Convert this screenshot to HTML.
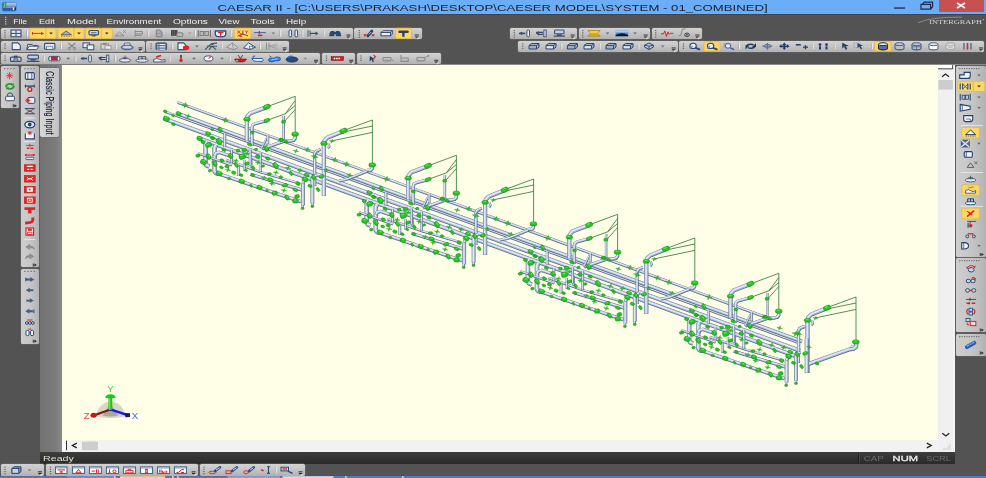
<!DOCTYPE html>
<html><head><meta charset="utf-8"><title>CAESAR II</title>
<style>
html,body{margin:0;padding:0;}
body{width:986px;height:478px;overflow:hidden;background:#535353;position:relative;font-family:"Liberation Sans",sans-serif;}
div{position:absolute;box-sizing:border-box;}
.tb{background:linear-gradient(#d3d3d3,#c5c5c5 45%,#b1b1b1);border-radius:1.5px;box-shadow:0 0 0 0.5px #6a6a6a;}
.tb.v{background:linear-gradient(90deg,#cecece,#c6c6c6 50%,#b3b3b3);}
#title{left:0;top:0;width:986px;height:14px;background:#6badf6;}
#close{left:939px;top:0;width:45px;height:11.8px;background:#c75050;}
#menu{left:0;top:13.8px;width:986px;height:1px;background:#3d4656;}
#topline{left:0;top:64.3px;width:986px;height:1.1px;background:#8a8a8a;}
#canvas{left:62px;top:65.2px;width:876px;height:375.3px;background:#ffffe7;}
#lstrip{left:40px;top:65px;width:22px;height:387px;background:linear-gradient(90deg,#727272,#7b7b7b 70%,#8a8a8a);}
#tab{left:40.3px;top:68px;width:18.4px;height:68.6px;background:linear-gradient(90deg,#d6d6d6,#c3c3c3);border-radius:0 0 2px 2px;box-shadow:0 0 0 0.5px #666;}
#hs{left:62px;top:65px;width:893.4px;height:387.1px;background:#f2f2f2;}
#vs{left:938px;top:65px;width:15.2px;height:386.1px;background:#f0f0f0;}
#rstrip{left:953.2px;top:65px;width:2.2px;height:387px;background:#f3f3f3;}
#status{left:40px;top:452px;width:915px;height:11.6px;background:linear-gradient(#3d3d3d,#2a2a2a);}
#botstrip{left:0;top:476.2px;width:986px;height:2px;background:#3f7fd6;}
svg{position:absolute;left:0;top:0;}
text{font-family:"Liberation Sans",sans-serif;}
</style></head><body>
<div id="title"></div><div id="close"></div>
<div id="menu"></div><div id="topline"></div>
<div id="lstrip"></div><div id="tab"></div>
<div id="hs"></div><div id="vs"></div><div id="rstrip"></div><div id="canvas"></div>
<div id="status"></div>
<div id="botstrip"></div>
<div class="tb" style="left:1.3px;top:27.6px;width:351.5px;height:11.5px;"></div>
<div class="tb" style="left:354.3px;top:27.6px;width:67.3px;height:11.5px;"></div>
<div class="tb" style="left:510.0px;top:27.6px;width:66.8px;height:11.5px;"></div>
<div class="tb" style="left:578.7px;top:27.6px;width:71.0px;height:11.5px;"></div>
<div class="tb" style="left:651.7px;top:27.6px;width:50.0px;height:11.5px;"></div>
<div class="tb" style="left:1.3px;top:40.9px;width:143.3px;height:10.7px;"></div>
<div class="tb" style="left:146.0px;top:40.9px;width:142.7px;height:10.7px;"></div>
<div class="tb" style="left:518.3px;top:40.9px;width:159.4px;height:10.7px;"></div>
<div class="tb" style="left:679.4px;top:40.9px;width:304.9px;height:10.7px;"></div>
<div class="tb" style="left:1.3px;top:53.0px;width:319.0px;height:11.1px;"></div>
<div class="tb" style="left:322.0px;top:53.0px;width:33.0px;height:11.1px;"></div>
<div class="tb" style="left:356.5px;top:53.0px;width:84.1px;height:11.1px;"></div>
<div class="tb" style="left:1.3px;top:464.1px;width:42.7px;height:11.9px;"></div>
<div class="tb" style="left:46.0px;top:464.1px;width:152.0px;height:11.9px;"></div>
<div class="tb" style="left:199.7px;top:464.1px;width:105.3px;height:11.9px;"></div>
<div class="tb v" style="left:1.0px;top:66.1px;width:18.0px;height:42.3px;"></div>
<div class="tb v" style="left:21.2px;top:66.1px;width:17.8px;height:201.3px;"></div>
<div class="tb v" style="left:21.2px;top:268.9px;width:17.8px;height:74.7px;"></div>
<div class="tb v" style="left:955.6px;top:66.3px;width:30.9px;height:190.7px;"></div>
<div class="tb v" style="left:955.6px;top:258.4px;width:30.9px;height:74.0px;"></div>
<div class="tb v" style="left:955.6px;top:334.4px;width:30.9px;height:21.2px;"></div>
<svg width="986" height="478" viewBox="0 0 986 478">
<defs><filter id="soft" x="-2%" y="-2%" width="104%" height="104%"><feGaussianBlur stdDeviation="0.32"/></filter><filter id="soft2" x="-1%" y="-1%" width="102%" height="102%"><feGaussianBlur stdDeviation="0.28"/></filter></defs>
<g id="model" filter="url(#soft)">
<path d="M177.6 102.5L771.0 319.1" fill="none" stroke="#56657f" stroke-width="2.8" stroke-linejoin="round"/>
<path d="M177.6 102.5L771.0 319.1" fill="none" stroke="#a9bad4" stroke-width="1.9" stroke-linejoin="round" transform="translate(-0.12,-0.3)"/>
<path d="M177.6 102.5L771.0 319.1" fill="none" stroke="#e4ecf7" stroke-width="0.9" stroke-linejoin="round" transform="translate(-0.25,-0.45)"/>
<path d="M165.0 111.6L800.0 343.4" fill="none" stroke="#56657f" stroke-width="2.5" stroke-linejoin="round"/>
<path d="M165.0 111.6L800.0 343.4" fill="none" stroke="#a9bad4" stroke-width="1.6" stroke-linejoin="round" transform="translate(-0.12,-0.3)"/>
<path d="M165.0 111.6L800.0 343.4" fill="none" stroke="#e4ecf7" stroke-width="0.8" stroke-linejoin="round" transform="translate(-0.25,-0.45)"/>
<path d="M177.6 113.6L802.0 341.5" fill="none" stroke="#56657f" stroke-width="3.7" stroke-linejoin="round"/>
<path d="M177.6 113.6L802.0 341.5" fill="none" stroke="#a9bad4" stroke-width="2.8" stroke-linejoin="round" transform="translate(-0.12,-0.3)"/>
<path d="M177.6 113.6L802.0 341.5" fill="none" stroke="#e4ecf7" stroke-width="1.2" stroke-linejoin="round" transform="translate(-0.25,-0.45)"/>
<path d="M164.0 118.6L800.0 350.7" fill="none" stroke="#56657f" stroke-width="4.2" stroke-linejoin="round"/>
<path d="M164.0 118.6L800.0 350.7" fill="none" stroke="#a9bad4" stroke-width="3.3" stroke-linejoin="round" transform="translate(-0.12,-0.3)"/>
<path d="M164.0 118.6L800.0 350.7" fill="none" stroke="#e4ecf7" stroke-width="1.4" stroke-linejoin="round" transform="translate(-0.25,-0.45)"/>
<path d="M198.6 138.2L796.0 356.3" fill="none" stroke="#56657f" stroke-width="4.0" stroke-linejoin="round"/>
<path d="M198.6 138.2L796.0 356.3" fill="none" stroke="#a9bad4" stroke-width="3.1" stroke-linejoin="round" transform="translate(-0.12,-0.3)"/>
<path d="M198.6 138.2L796.0 356.3" fill="none" stroke="#e4ecf7" stroke-width="1.3" stroke-linejoin="round" transform="translate(-0.25,-0.45)"/>
<g id="rp"><path d="M369.4 170.4L347.0 179.4L339.0 181.0" fill="none" stroke="#56657f" stroke-width="3.0" stroke-linejoin="round"/><path d="M369.4 170.4L347.0 179.4L339.0 181.0" fill="none" stroke="#a9bad4" stroke-width="2.1" stroke-linejoin="round" transform="translate(-0.12,-0.3)"/><path d="M369.4 170.4L347.0 179.4L339.0 181.0" fill="none" stroke="#e4ecf7" stroke-width="1.0" stroke-linejoin="round" transform="translate(-0.25,-0.45)"/><path d="M310.5 150.3L307.9 150.3L306.6 152.1L306.5 150.0L304.3 148.9L306.9 148.9L308.2 147.1L308.3 149.2z" fill="#24c624" stroke="#0f850f" stroke-width="0.3"/><path d="M337.9 160.5L335.3 160.5L334.0 162.3L333.9 160.2L331.7 159.1L334.3 159.1L335.6 157.3L335.7 159.4z" fill="#24c624" stroke="#0f850f" stroke-width="0.3"/></g>
<use href="#rp" transform="translate(161.2,59.0)"/>
<use href="#rp" transform="translate(322.4,118.0)"/>
<g id="mp"><path d="M246.9 141.0L246.9 120.5L247.4 116.6L250.2 113.4L266.4 107.2" fill="none" stroke="#56657f" stroke-width="4.2" stroke-linejoin="round"/>
<path d="M246.9 141.0L246.9 120.5L247.4 116.6L250.2 113.4L266.4 107.2" fill="none" stroke="#a9bad4" stroke-width="3.4" stroke-linejoin="round" transform="translate(-0.12,-0.3)"/>
<path d="M246.9 141.0L246.9 120.5L247.4 116.6L250.2 113.4L266.4 107.2" fill="none" stroke="#e4ecf7" stroke-width="1.4" stroke-linejoin="round" transform="translate(-0.25,-0.45)"/>
<path d="M295.2 135.0L295.2 138.4L293.6 140.4L290.0 141.0L283.5 141.4L262.0 149.0" fill="none" stroke="#56657f" stroke-width="3.3" stroke-linejoin="round"/>
<path d="M295.2 135.0L295.2 138.4L293.6 140.4L290.0 141.0L283.5 141.4L262.0 149.0" fill="none" stroke="#a9bad4" stroke-width="2.4" stroke-linejoin="round" transform="translate(-0.12,-0.3)"/>
<path d="M295.2 135.0L295.2 138.4L293.6 140.4L290.0 141.0L283.5 141.4L262.0 149.0" fill="none" stroke="#e4ecf7" stroke-width="1.1" stroke-linejoin="round" transform="translate(-0.25,-0.45)"/>
<path d="M252.0 146.0L252.0 128.2L252.6 125.4L254.6 124.0L266.6 120.7" fill="none" stroke="#56657f" stroke-width="3.2" stroke-linejoin="round"/>
<path d="M252.0 146.0L252.0 128.2L252.6 125.4L254.6 124.0L266.6 120.7" fill="none" stroke="#a9bad4" stroke-width="2.4" stroke-linejoin="round" transform="translate(-0.12,-0.3)"/>
<path d="M252.0 146.0L252.0 128.2L252.6 125.4L254.6 124.0L266.6 120.7" fill="none" stroke="#e4ecf7" stroke-width="1.1" stroke-linejoin="round" transform="translate(-0.25,-0.45)"/>
<path d="M283.7 139.5L283.7 116.0" fill="none" stroke="#56657f" stroke-width="2.5" stroke-linejoin="round"/>
<path d="M283.7 139.5L283.7 116.0" fill="none" stroke="#a9bad4" stroke-width="1.6" stroke-linejoin="round" transform="translate(-0.12,-0.3)"/>
<path d="M283.7 139.5L283.7 116.0" fill="none" stroke="#e4ecf7" stroke-width="0.8" stroke-linejoin="round" transform="translate(-0.25,-0.45)"/>
<path d="M267.6 136.4L261.4 149.0" fill="none" stroke="#56657f" stroke-width="2.1" stroke-linejoin="round"/>
<path d="M267.6 136.4L261.4 149.0" fill="none" stroke="#a9bad4" stroke-width="1.2" stroke-linejoin="round" transform="translate(-0.12,-0.3)"/>
<path d="M267.6 136.4L261.4 149.0" fill="none" stroke="#e4ecf7" stroke-width="0.7" stroke-linejoin="round" transform="translate(-0.25,-0.45)"/>
<path d="M323.9 196.0L323.9 144.5L324.6 140.6L327.6 137.6L343.2 131.2" fill="none" stroke="#56657f" stroke-width="4.2" stroke-linejoin="round"/>
<path d="M323.9 196.0L323.9 144.5L324.6 140.6L327.6 137.6L343.2 131.2" fill="none" stroke="#a9bad4" stroke-width="3.4" stroke-linejoin="round" transform="translate(-0.12,-0.3)"/>
<path d="M323.9 196.0L323.9 144.5L324.6 140.6L327.6 137.6L343.2 131.2" fill="none" stroke="#e4ecf7" stroke-width="1.4" stroke-linejoin="round" transform="translate(-0.25,-0.45)"/>
<path d="M328.4 143.5L329.4 146.5L328.0 148.4" fill="none" stroke="#56657f" stroke-width="2.2" stroke-linejoin="round"/>
<path d="M328.4 143.5L329.4 146.5L328.0 148.4" fill="none" stroke="#a9bad4" stroke-width="1.4" stroke-linejoin="round" transform="translate(-0.12,-0.3)"/>
<path d="M328.4 143.5L329.4 146.5L328.0 148.4" fill="none" stroke="#e4ecf7" stroke-width="0.7" stroke-linejoin="round" transform="translate(-0.25,-0.45)"/>
<path d="M372.4 166.0L372.2 169.0L370.2 170.6L367.0 170.2" fill="none" stroke="#56657f" stroke-width="3.3" stroke-linejoin="round"/>
<path d="M372.4 166.0L372.2 169.0L370.2 170.6L367.0 170.2" fill="none" stroke="#a9bad4" stroke-width="2.4" stroke-linejoin="round" transform="translate(-0.12,-0.3)"/>
<path d="M372.4 166.0L372.2 169.0L370.2 170.6L367.0 170.2" fill="none" stroke="#e4ecf7" stroke-width="1.1" stroke-linejoin="round" transform="translate(-0.25,-0.45)"/>
<path d="M314.8 186.0L314.8 154.0L316.0 151.4L320.6 149.4" fill="none" stroke="#56657f" stroke-width="3.0" stroke-linejoin="round"/>
<path d="M314.8 186.0L314.8 154.0L316.0 151.4L320.6 149.4" fill="none" stroke="#a9bad4" stroke-width="2.1" stroke-linejoin="round" transform="translate(-0.12,-0.3)"/>
<path d="M314.8 186.0L314.8 154.0L316.0 151.4L320.6 149.4" fill="none" stroke="#e4ecf7" stroke-width="1.0" stroke-linejoin="round" transform="translate(-0.25,-0.45)"/>
<path d="M207.0 141.5L205.6 144.0L205.5 163.0L206.6 165.4L209.4 166.6" fill="none" stroke="#56657f" stroke-width="4.5" stroke-linejoin="round"/>
<path d="M207.0 141.5L205.6 144.0L205.5 163.0L206.6 165.4L209.4 166.6" fill="none" stroke="#a9bad4" stroke-width="3.6" stroke-linejoin="round" transform="translate(-0.12,-0.3)"/>
<path d="M207.0 141.5L205.6 144.0L205.5 163.0L206.6 165.4L209.4 166.6" fill="none" stroke="#e4ecf7" stroke-width="1.5" stroke-linejoin="round" transform="translate(-0.25,-0.45)"/>
<path d="M216.0 145.0L214.6 148.0L214.6 171.0L215.8 173.0L218.4 173.8" fill="none" stroke="#56657f" stroke-width="4.5" stroke-linejoin="round"/>
<path d="M216.0 145.0L214.6 148.0L214.6 171.0L215.8 173.0L218.4 173.8" fill="none" stroke="#a9bad4" stroke-width="3.6" stroke-linejoin="round" transform="translate(-0.12,-0.3)"/>
<path d="M216.0 145.0L214.6 148.0L214.6 171.0L215.8 173.0L218.4 173.8" fill="none" stroke="#e4ecf7" stroke-width="1.5" stroke-linejoin="round" transform="translate(-0.25,-0.45)"/>
<path d="M214.8 156.0L216.0 153.4L219.4 152.4L231.0 156.4" fill="none" stroke="#56657f" stroke-width="3.5" stroke-linejoin="round"/>
<path d="M214.8 156.0L216.0 153.4L219.4 152.4L231.0 156.4" fill="none" stroke="#a9bad4" stroke-width="2.6" stroke-linejoin="round" transform="translate(-0.12,-0.3)"/>
<path d="M214.8 156.0L216.0 153.4L219.4 152.4L231.0 156.4" fill="none" stroke="#e4ecf7" stroke-width="1.2" stroke-linejoin="round" transform="translate(-0.25,-0.45)"/>
<path d="M198.0 153.4L232.0 165.4" fill="none" stroke="#56657f" stroke-width="2.3" stroke-linejoin="round"/>
<path d="M198.0 153.4L232.0 165.4" fill="none" stroke="#a9bad4" stroke-width="1.4" stroke-linejoin="round" transform="translate(-0.12,-0.3)"/>
<path d="M198.0 153.4L232.0 165.4" fill="none" stroke="#e4ecf7" stroke-width="0.8" stroke-linejoin="round" transform="translate(-0.25,-0.45)"/>
<path d="M218.0 173.6L287.9 197.4L301.0 201.6" fill="none" stroke="#56657f" stroke-width="3.5" stroke-linejoin="round"/>
<path d="M218.0 173.6L287.9 197.4L301.0 201.6" fill="none" stroke="#a9bad4" stroke-width="2.6" stroke-linejoin="round" transform="translate(-0.12,-0.3)"/>
<path d="M218.0 173.6L287.9 197.4L301.0 201.6" fill="none" stroke="#e4ecf7" stroke-width="1.2" stroke-linejoin="round" transform="translate(-0.25,-0.45)"/>
<path d="M250.2 174.3L303.0 190.4" fill="none" stroke="#56657f" stroke-width="3.2" stroke-linejoin="round"/>
<path d="M250.2 174.3L303.0 190.4" fill="none" stroke="#a9bad4" stroke-width="2.3" stroke-linejoin="round" transform="translate(-0.12,-0.3)"/>
<path d="M250.2 174.3L303.0 190.4" fill="none" stroke="#e4ecf7" stroke-width="1.0" stroke-linejoin="round" transform="translate(-0.25,-0.45)"/>
<path d="M226.0 160.0L262.0 172.6L300.0 183.6" fill="none" stroke="#56657f" stroke-width="2.5" stroke-linejoin="round"/>
<path d="M226.0 160.0L262.0 172.6L300.0 183.6" fill="none" stroke="#a9bad4" stroke-width="1.6" stroke-linejoin="round" transform="translate(-0.12,-0.3)"/>
<path d="M226.0 160.0L262.0 172.6L300.0 183.6" fill="none" stroke="#e4ecf7" stroke-width="0.8" stroke-linejoin="round" transform="translate(-0.25,-0.45)"/>
<path d="M260.3 153.0L260.3 172.0" fill="none" stroke="#56657f" stroke-width="2.8" stroke-linejoin="round"/>
<path d="M260.3 153.0L260.3 172.0" fill="none" stroke="#a9bad4" stroke-width="1.9" stroke-linejoin="round" transform="translate(-0.12,-0.3)"/>
<path d="M260.3 153.0L260.3 172.0" fill="none" stroke="#e4ecf7" stroke-width="0.9" stroke-linejoin="round" transform="translate(-0.25,-0.45)"/>
<path d="M251.2 158.0L251.2 167.0" fill="none" stroke="#56657f" stroke-width="2.5" stroke-linejoin="round"/>
<path d="M251.2 158.0L251.2 167.0" fill="none" stroke="#a9bad4" stroke-width="1.6" stroke-linejoin="round" transform="translate(-0.12,-0.3)"/>
<path d="M251.2 158.0L251.2 167.0" fill="none" stroke="#e4ecf7" stroke-width="0.8" stroke-linejoin="round" transform="translate(-0.25,-0.45)"/>
<path d="M238.7 166.0L238.7 176.0" fill="none" stroke="#56657f" stroke-width="2.8" stroke-linejoin="round"/>
<path d="M238.7 166.0L238.7 176.0" fill="none" stroke="#a9bad4" stroke-width="1.9" stroke-linejoin="round" transform="translate(-0.12,-0.3)"/>
<path d="M238.7 166.0L238.7 176.0" fill="none" stroke="#e4ecf7" stroke-width="0.9" stroke-linejoin="round" transform="translate(-0.25,-0.45)"/>
<path d="M224.8 133.5L224.8 147.0" fill="none" stroke="#56657f" stroke-width="2.8" stroke-linejoin="round"/>
<path d="M224.8 133.5L224.8 147.0" fill="none" stroke="#a9bad4" stroke-width="1.9" stroke-linejoin="round" transform="translate(-0.12,-0.3)"/>
<path d="M224.8 133.5L224.8 147.0" fill="none" stroke="#e4ecf7" stroke-width="0.9" stroke-linejoin="round" transform="translate(-0.25,-0.45)"/>
<path d="M250.2 149.5L250.2 165.5" fill="none" stroke="#56657f" stroke-width="2.8" stroke-linejoin="round"/>
<path d="M250.2 149.5L250.2 165.5" fill="none" stroke="#a9bad4" stroke-width="1.9" stroke-linejoin="round" transform="translate(-0.12,-0.3)"/>
<path d="M250.2 149.5L250.2 165.5" fill="none" stroke="#e4ecf7" stroke-width="0.9" stroke-linejoin="round" transform="translate(-0.25,-0.45)"/>
<path d="M268.0 135.4L268.0 144.0" fill="none" stroke="#56657f" stroke-width="2.5" stroke-linejoin="round"/>
<path d="M268.0 135.4L268.0 144.0" fill="none" stroke="#a9bad4" stroke-width="1.6" stroke-linejoin="round" transform="translate(-0.12,-0.3)"/>
<path d="M268.0 135.4L268.0 144.0" fill="none" stroke="#e4ecf7" stroke-width="0.8" stroke-linejoin="round" transform="translate(-0.25,-0.45)"/>
<path d="M231.6 150.0L231.6 163.0" fill="none" stroke="#56657f" stroke-width="2.5" stroke-linejoin="round"/>
<path d="M231.6 150.0L231.6 163.0" fill="none" stroke="#a9bad4" stroke-width="1.6" stroke-linejoin="round" transform="translate(-0.12,-0.3)"/>
<path d="M231.6 150.0L231.6 163.0" fill="none" stroke="#e4ecf7" stroke-width="0.8" stroke-linejoin="round" transform="translate(-0.25,-0.45)"/>
<path d="M244.4 160.0L244.4 171.0" fill="none" stroke="#56657f" stroke-width="2.3" stroke-linejoin="round"/>
<path d="M244.4 160.0L244.4 171.0" fill="none" stroke="#a9bad4" stroke-width="1.4" stroke-linejoin="round" transform="translate(-0.12,-0.3)"/>
<path d="M244.4 160.0L244.4 171.0" fill="none" stroke="#e4ecf7" stroke-width="0.8" stroke-linejoin="round" transform="translate(-0.25,-0.45)"/>
<path d="M303.0 183.4L303.0 205.4" fill="none" stroke="#56657f" stroke-width="3.8" stroke-linejoin="round"/>
<path d="M303.0 183.4L303.0 205.4" fill="none" stroke="#a9bad4" stroke-width="2.9" stroke-linejoin="round" transform="translate(-0.12,-0.3)"/>
<path d="M303.0 183.4L303.0 205.4" fill="none" stroke="#e4ecf7" stroke-width="1.2" stroke-linejoin="round" transform="translate(-0.25,-0.45)"/>
<path d="M312.4 178.0L312.4 203.6" fill="none" stroke="#56657f" stroke-width="3.8" stroke-linejoin="round"/>
<path d="M312.4 178.0L312.4 203.6" fill="none" stroke="#a9bad4" stroke-width="2.9" stroke-linejoin="round" transform="translate(-0.12,-0.3)"/>
<path d="M312.4 178.0L312.4 203.6" fill="none" stroke="#e4ecf7" stroke-width="1.2" stroke-linejoin="round" transform="translate(-0.25,-0.45)"/>
<path d="M303.0 183.6L304.0 181.0L307.0 179.6" fill="none" stroke="#56657f" stroke-width="3.3" stroke-linejoin="round"/>
<path d="M303.0 183.6L304.0 181.0L307.0 179.6" fill="none" stroke="#a9bad4" stroke-width="2.4" stroke-linejoin="round" transform="translate(-0.12,-0.3)"/>
<path d="M303.0 183.6L304.0 181.0L307.0 179.6" fill="none" stroke="#e4ecf7" stroke-width="1.1" stroke-linejoin="round" transform="translate(-0.25,-0.45)"/>
<path d="M312.4 178.4L313.6 176.4L317.0 175.4" fill="none" stroke="#56657f" stroke-width="3.3" stroke-linejoin="round"/>
<path d="M312.4 178.4L313.6 176.4L317.0 175.4" fill="none" stroke="#a9bad4" stroke-width="2.4" stroke-linejoin="round" transform="translate(-0.12,-0.3)"/>
<path d="M312.4 178.4L313.6 176.4L317.0 175.4" fill="none" stroke="#e4ecf7" stroke-width="1.1" stroke-linejoin="round" transform="translate(-0.25,-0.45)"/>
<path d="M302.6 205.0L302.6 208.0" fill="none" stroke="#56657f" stroke-width="2.3" stroke-linejoin="round"/>
<path d="M302.6 205.0L302.6 208.0" fill="none" stroke="#a9bad4" stroke-width="1.4" stroke-linejoin="round" transform="translate(-0.12,-0.3)"/>
<path d="M302.6 205.0L302.6 208.0" fill="none" stroke="#e4ecf7" stroke-width="0.8" stroke-linejoin="round" transform="translate(-0.25,-0.45)"/>
<path d="M312.4 203.0L312.4 206.0" fill="none" stroke="#56657f" stroke-width="2.3" stroke-linejoin="round"/>
<path d="M312.4 203.0L312.4 206.0" fill="none" stroke="#a9bad4" stroke-width="1.4" stroke-linejoin="round" transform="translate(-0.12,-0.3)"/>
<path d="M312.4 203.0L312.4 206.0" fill="none" stroke="#e4ecf7" stroke-width="0.8" stroke-linejoin="round" transform="translate(-0.25,-0.45)"/></g>
<use href="#mp" transform="translate(161.2,59.0)"/>
<use href="#mp" transform="translate(322.4,118.0)"/>
<use href="#mp" transform="translate(483.6,177.0)"/>
<path d="M856.4 344.0L856.2 347.0L853.6 349.0L849.0 349.6L808.5 364.0" fill="none" stroke="#56657f" stroke-width="4.0" stroke-linejoin="round"/>
<path d="M856.4 344.0L856.2 347.0L853.6 349.0L849.0 349.6L808.5 364.0" fill="none" stroke="#a9bad4" stroke-width="3.1" stroke-linejoin="round" transform="translate(-0.12,-0.3)"/>
<path d="M856.4 344.0L856.2 347.0L853.6 349.0L849.0 349.6L808.5 364.0" fill="none" stroke="#e4ecf7" stroke-width="1.3" stroke-linejoin="round" transform="translate(-0.25,-0.45)"/>
<path d="M798.6 352.0L798.6 331.0L799.8 328.4L805.0 326.4" fill="none" stroke="#56657f" stroke-width="3.2" stroke-linejoin="round"/>
<path d="M798.6 352.0L798.6 331.0L799.8 328.4L805.0 326.4" fill="none" stroke="#a9bad4" stroke-width="2.3" stroke-linejoin="round" transform="translate(-0.12,-0.3)"/>
<path d="M798.6 352.0L798.6 331.0L799.8 328.4L805.0 326.4" fill="none" stroke="#e4ecf7" stroke-width="1.0" stroke-linejoin="round" transform="translate(-0.25,-0.45)"/>
<path d="M806.8 338.6L806.8 373.0" fill="none" stroke="#56657f" stroke-width="4.2" stroke-linejoin="round"/>
<path d="M806.8 338.6L806.8 373.0" fill="none" stroke="#a9bad4" stroke-width="3.4" stroke-linejoin="round" transform="translate(-0.12,-0.3)"/>
<path d="M806.8 338.6L806.8 373.0" fill="none" stroke="#e4ecf7" stroke-width="1.4" stroke-linejoin="round" transform="translate(-0.25,-0.45)"/>
<g id="mh"><path d="M267.0 106.8L295.2 96.3L295.2 132.5" fill="none" stroke="#2a742e" stroke-width="0.8"/>
<path d="M267.0 120.4L285.2 113.8L295.2 100.5" fill="none" stroke="#2a742e" stroke-width="0.8"/>
<path d="M285.2 113.8L295.2 105.5" fill="none" stroke="#2a742e" stroke-width="0.8"/>
<path d="M284.0 122.0L295.2 109.5" fill="none" stroke="#2a742e" stroke-width="0.8"/>
<path d="M343.5 130.6L372.4 120.0L372.4 163.0" fill="none" stroke="#2a742e" stroke-width="0.8"/>
<path d="M344.5 131.8L372.4 126.0" fill="none" stroke="#2a742e" stroke-width="0.8"/>
<path d="M331.4 141.0L372.4 132.4" fill="none" stroke="#2a742e" stroke-width="0.8"/></g>
<use href="#mh" transform="translate(161.2,59.0)"/>
<use href="#mh" transform="translate(322.4,118.0)"/>
<use href="#mh" transform="translate(483.6,177.0)"/>
<rect x="163.2" y="116.5" width="6.3" height="4.5" rx="1.7" transform="rotate(20 166.3 118.8)" fill="#24c624" stroke="#0f850f" stroke-width="0.5"/>
<rect x="164.6" y="117.1" width="2.8" height="1.2" rx="0.5" transform="rotate(20 166.3 118.8)" fill="#6be86b" opacity=".8"/>
<rect x="176.0" y="111.9" width="5.2" height="3.7" rx="1.4" transform="rotate(20 178.6 113.8)" fill="#24c624" stroke="#0f850f" stroke-width="0.5"/>
<rect x="177.2" y="112.4" width="2.3" height="1.0" rx="0.5" transform="rotate(20 178.6 113.8)" fill="#6be86b" opacity=".8"/>
<rect x="163.5" y="110.2" width="3.4" height="2.4" rx="0.9" transform="rotate(20 165.2 111.4)" fill="#24c624" stroke="#0f850f" stroke-width="0.5"/>
<rect x="196.9" y="136.5" width="5.4" height="3.9" rx="1.5" transform="rotate(20 199.6 138.4)" fill="#24c624" stroke="#0f850f" stroke-width="0.5"/>
<rect x="198.1" y="136.9" width="2.4" height="1.1" rx="0.5" transform="rotate(20 199.6 138.4)" fill="#6be86b" opacity=".8"/>
<rect x="171.7" y="123.0" width="3.4" height="2.4" rx="0.9" transform="rotate(20 173.4 124.2)" fill="#24c624" stroke="#0f850f" stroke-width="0.5"/>
<rect x="171.7" y="114.6" width="2.7" height="1.9" rx="0.7" transform="rotate(20 173.0 115.6)" fill="#24c624" stroke="#0f850f" stroke-width="0.5"/>
<g id="mg"><rect x="243.7" y="117.4" width="6.5" height="3.6" rx="1.8" transform="rotate(0 246.9 119.2)" fill="#24c624" stroke="#0f850f" stroke-width="0.5"/>
<rect x="245.1" y="117.9" width="2.9" height="1.0" rx="0.5" transform="rotate(0 246.9 119.2)" fill="#6be86b" opacity=".8"/>
<rect x="263.2" y="104.7" width="7.2" height="4.3" rx="2.0" transform="rotate(-20 266.8 106.9)" fill="#24c624" stroke="#0f850f" stroke-width="0.5"/>
<rect x="264.8" y="105.3" width="3.2" height="1.2" rx="0.5" transform="rotate(-20 266.8 106.9)" fill="#6be86b" opacity=".8"/>
<rect x="291.8" y="132.2" width="6.7" height="4.0" rx="1.8" transform="rotate(0 295.2 134.2)" fill="#24c624" stroke="#0f850f" stroke-width="0.5"/>
<rect x="293.4" y="132.7" width="3.0" height="1.1" rx="0.5" transform="rotate(0 295.2 134.2)" fill="#6be86b" opacity=".8"/>
<rect x="264.0" y="118.8" width="6.0" height="3.3" rx="1.7" transform="rotate(-18 267.0 120.5)" fill="#24c624" stroke="#0f850f" stroke-width="0.5"/>
<rect x="265.3" y="119.3" width="2.7" height="0.9" rx="0.5" transform="rotate(-18 267.0 120.5)" fill="#6be86b" opacity=".8"/>
<rect x="250.4" y="131.3" width="3.6" height="2.4" rx="1.0" transform="rotate(20 252.2 132.5)" fill="#24c624" stroke="#0f850f" stroke-width="0.5"/>
<rect x="281.5" y="120.4" width="4.0" height="2.7" rx="1.1" transform="rotate(0 283.5 121.8)" fill="#24c624" stroke="#0f850f" stroke-width="0.5"/>
<rect x="279.2" y="138.3" width="4.5" height="3.0" rx="1.2" transform="rotate(20 281.4 139.8)" fill="#24c624" stroke="#0f850f" stroke-width="0.5"/>
<rect x="284.2" y="140.4" width="3.6" height="2.4" rx="1.0" transform="rotate(20 286.0 141.6)" fill="#24c624" stroke="#0f850f" stroke-width="0.5"/>
<rect x="320.7" y="141.6" width="6.5" height="3.6" rx="1.8" transform="rotate(0 323.9 143.4)" fill="#24c624" stroke="#0f850f" stroke-width="0.5"/>
<rect x="322.1" y="142.1" width="2.9" height="1.0" rx="0.5" transform="rotate(0 323.9 143.4)" fill="#6be86b" opacity=".8"/>
<rect x="339.8" y="128.7" width="7.4" height="4.4" rx="2.0" transform="rotate(-20 343.5 130.9)" fill="#24c624" stroke="#0f850f" stroke-width="0.5"/>
<rect x="341.5" y="129.2" width="3.3" height="1.2" rx="0.5" transform="rotate(-20 343.5 130.9)" fill="#6be86b" opacity=".8"/>
<path d="M334.3 141.7L332.2 141.8L331.1 143.2L331.1 141.5L329.3 140.7L331.4 140.6L332.5 139.2L332.5 140.9z" fill="#24c624" stroke="#0f850f" stroke-width="0.3"/>
<rect x="368.9" y="163.0" width="6.7" height="4.0" rx="1.8" transform="rotate(0 372.3 165.0)" fill="#24c624" stroke="#0f850f" stroke-width="0.5"/>
<rect x="370.5" y="163.5" width="3.0" height="1.1" rx="0.5" transform="rotate(0 372.3 165.0)" fill="#6be86b" opacity=".8"/>
<path d="M318.2 157.4L315.2 157.4L313.6 159.5L313.6 157.1L311.0 155.8L314.0 155.8L315.6 153.7L315.6 156.1z" fill="#24c624" stroke="#0f850f" stroke-width="0.3"/>
<path d="M327.9 170.5L325.8 170.6L324.7 172.0L324.7 170.3L322.9 169.5L325.0 169.4L326.1 168.0L326.1 169.7z" fill="#24c624" stroke="#0f850f" stroke-width="0.3"/>
<path d="M188.5 105.9L185.7 106.0L184.2 107.9L184.1 105.6L181.7 104.5L184.5 104.4L186.0 102.5L186.1 104.8z" fill="#24c624" stroke="#0f850f" stroke-width="0.3"/>
<path d="M228.6 120.7L225.8 120.8L224.3 122.7L224.2 120.4L221.8 119.3L224.6 119.2L226.1 117.3L226.2 119.6z" fill="#24c624" stroke="#0f850f" stroke-width="0.3"/>
<path d="M191.0 116.8L188.7 116.8L187.4 118.4L187.4 116.6L185.4 115.6L187.7 115.6L189.0 114.0L189.0 115.8z" fill="#24c624" stroke="#0f850f" stroke-width="0.3"/>
<rect x="301.1" y="207.4" width="2.9" height="2.0" rx="0.8" transform="rotate(0 302.6 208.4)" fill="#24c624" stroke="#0f850f" stroke-width="0.5"/>
<rect x="310.9" y="205.4" width="2.9" height="2.0" rx="0.8" transform="rotate(0 312.4 206.4)" fill="#24c624" stroke="#0f850f" stroke-width="0.5"/>
<rect x="215.9" y="139.1" width="6.2" height="4.7" rx="1.7" transform="rotate(55 219.0 141.5)" fill="#24c624" stroke="#0f850f" stroke-width="0.5"/>
<rect x="217.3" y="139.7" width="2.8" height="1.3" rx="0.5" transform="rotate(55 219.0 141.5)" fill="#6be86b" opacity=".8"/>
<rect x="205.4" y="142.9" width="6.3" height="4.2" rx="1.7" transform="rotate(-15 208.5 145.0)" fill="#24c624" stroke="#0f850f" stroke-width="0.5"/>
<rect x="206.8" y="143.4" width="2.8" height="1.2" rx="0.5" transform="rotate(-15 208.5 145.0)" fill="#6be86b" opacity=".8"/>
<rect x="200.5" y="159.8" width="6.0" height="4.5" rx="1.6" transform="rotate(20 203.5 162.0)" fill="#24c624" stroke="#0f850f" stroke-width="0.5"/>
<rect x="201.9" y="160.3" width="2.7" height="1.2" rx="0.5" transform="rotate(20 203.5 162.0)" fill="#6be86b" opacity=".8"/>
<rect x="205.8" y="154.6" width="5.4" height="4.1" rx="1.5" transform="rotate(55 208.5 156.6)" fill="#24c624" stroke="#0f850f" stroke-width="0.5"/>
<rect x="207.0" y="155.1" width="2.4" height="1.1" rx="0.5" transform="rotate(55 208.5 156.6)" fill="#6be86b" opacity=".8"/>
<rect x="247.4" y="143.2" width="4.5" height="2.6" rx="1.2" transform="rotate(20 249.7 144.5)" fill="#24c624" stroke="#0f850f" stroke-width="0.5"/>
<rect x="241.9" y="148.4" width="4.7" height="3.3" rx="1.3" transform="rotate(0 244.2 150.0)" fill="#24c624" stroke="#0f850f" stroke-width="0.5"/>
<rect x="239.0" y="154.1" width="6.4" height="5.1" rx="1.8" transform="rotate(-15 242.2 156.6)" fill="#24c624" stroke="#0f850f" stroke-width="0.5"/>
<rect x="240.4" y="154.7" width="2.9" height="1.4" rx="0.5" transform="rotate(-15 242.2 156.6)" fill="#6be86b" opacity=".8"/>
<rect x="228.0" y="154.1" width="5.2" height="3.7" rx="1.4" transform="rotate(55 230.6 156.0)" fill="#24c624" stroke="#0f850f" stroke-width="0.5"/>
<rect x="229.2" y="154.6" width="2.3" height="1.0" rx="0.5" transform="rotate(55 230.6 156.0)" fill="#6be86b" opacity=".8"/>
<rect x="233.6" y="163.5" width="5.2" height="2.9" rx="1.4" transform="rotate(55 236.2 165.0)" fill="#24c624" stroke="#0f850f" stroke-width="0.5"/>
<rect x="234.8" y="163.9" width="2.3" height="0.8" rx="0.5" transform="rotate(55 236.2 165.0)" fill="#6be86b" opacity=".8"/>
<rect x="231.7" y="171.2" width="4.1" height="2.9" rx="1.1" transform="rotate(20 233.7 172.6)" fill="#24c624" stroke="#0f850f" stroke-width="0.5"/>
<rect x="215.9" y="171.3" width="6.3" height="4.1" rx="1.7" transform="rotate(20 219.0 173.4)" fill="#24c624" stroke="#0f850f" stroke-width="0.5"/>
<rect x="217.3" y="171.8" width="2.8" height="1.1" rx="0.5" transform="rotate(20 219.0 173.4)" fill="#6be86b" opacity=".8"/>
<rect x="211.6" y="161.8" width="5.9" height="3.6" rx="1.6" transform="rotate(55 214.6 163.6)" fill="#24c624" stroke="#0f850f" stroke-width="0.5"/>
<rect x="213.0" y="162.3" width="2.7" height="1.0" rx="0.5" transform="rotate(55 214.6 163.6)" fill="#6be86b" opacity=".8"/>
<rect x="238.9" y="179.4" width="5.6" height="4.0" rx="1.5" transform="rotate(20 241.7 181.4)" fill="#24c624" stroke="#0f850f" stroke-width="0.5"/>
<rect x="240.2" y="179.9" width="2.5" height="1.1" rx="0.5" transform="rotate(20 241.7 181.4)" fill="#6be86b" opacity=".8"/>
<rect x="267.6" y="178.2" width="5.4" height="3.5" rx="1.5" transform="rotate(20 270.3 180.0)" fill="#24c624" stroke="#0f850f" stroke-width="0.5"/>
<rect x="268.8" y="178.7" width="2.4" height="1.0" rx="0.5" transform="rotate(20 270.3 180.0)" fill="#6be86b" opacity=".8"/>
<rect x="255.6" y="155.1" width="4.2" height="3.1" rx="1.2" transform="rotate(20 257.7 156.6)" fill="#24c624" stroke="#0f850f" stroke-width="0.5"/>
<rect x="265.8" y="157.2" width="4.0" height="2.7" rx="1.1" transform="rotate(20 267.8 158.6)" fill="#24c624" stroke="#0f850f" stroke-width="0.5"/>
<rect x="251.3" y="166.6" width="3.7" height="2.7" rx="1.0" transform="rotate(55 253.2 168.0)" fill="#24c624" stroke="#0f850f" stroke-width="0.5"/>
<rect x="250.9" y="173.8" width="3.7" height="2.4" rx="1.0" transform="rotate(20 252.7 175.0)" fill="#24c624" stroke="#0f850f" stroke-width="0.5"/>
<rect x="267.2" y="172.8" width="4.2" height="2.3" rx="1.2" transform="rotate(0 269.3 174.0)" fill="#24c624" stroke="#0f850f" stroke-width="0.5"/>
<rect x="239.4" y="174.0" width="3.5" height="2.3" rx="1.0" transform="rotate(20 241.2 175.2)" fill="#24c624" stroke="#0f850f" stroke-width="0.5"/>
<rect x="195.9" y="154.2" width="4.2" height="2.8" rx="1.2" transform="rotate(-15 198.0 155.6)" fill="#24c624" stroke="#0f850f" stroke-width="0.5"/>
<rect x="201.1" y="140.6" width="3.8" height="2.9" rx="1.1" transform="rotate(20 203.0 142.0)" fill="#24c624" stroke="#0f850f" stroke-width="0.5"/>
<rect x="210.4" y="136.6" width="4.3" height="2.7" rx="1.2" transform="rotate(20 212.6 138.0)" fill="#24c624" stroke="#0f850f" stroke-width="0.5"/>
<rect x="265.1" y="148.8" width="3.3" height="2.5" rx="0.9" transform="rotate(-15 266.8 150.0)" fill="#24c624" stroke="#0f850f" stroke-width="0.5"/>
<rect x="256.9" y="185.6" width="5.3" height="3.9" rx="1.5" transform="rotate(20 259.6 187.5)" fill="#24c624" stroke="#0f850f" stroke-width="0.5"/>
<rect x="258.1" y="186.1" width="2.4" height="1.1" rx="0.5" transform="rotate(20 259.6 187.5)" fill="#6be86b" opacity=".8"/>
<rect x="272.1" y="191.2" width="5.2" height="3.9" rx="1.4" transform="rotate(-15 274.7 193.1)" fill="#24c624" stroke="#0f850f" stroke-width="0.5"/>
<rect x="273.3" y="191.7" width="2.3" height="1.1" rx="0.5" transform="rotate(-15 274.7 193.1)" fill="#6be86b" opacity=".8"/>
<rect x="284.2" y="195.9" width="5.4" height="3.2" rx="1.5" transform="rotate(55 286.9 197.5)" fill="#24c624" stroke="#0f850f" stroke-width="0.5"/>
<rect x="285.4" y="196.3" width="2.4" height="0.9" rx="0.5" transform="rotate(55 286.9 197.5)" fill="#6be86b" opacity=".8"/>
<rect x="292.7" y="198.9" width="5.5" height="4.1" rx="1.5" transform="rotate(0 295.4 200.9)" fill="#24c624" stroke="#0f850f" stroke-width="0.5"/>
<rect x="293.9" y="199.4" width="2.5" height="1.1" rx="0.5" transform="rotate(0 295.4 200.9)" fill="#6be86b" opacity=".8"/>
<rect x="282.3" y="183.7" width="5.3" height="3.1" rx="1.5" transform="rotate(-15 285.0 185.2)" fill="#24c624" stroke="#0f850f" stroke-width="0.5"/>
<rect x="283.5" y="184.0" width="2.4" height="0.9" rx="0.5" transform="rotate(-15 285.0 185.2)" fill="#6be86b" opacity=".8"/>
<rect x="292.9" y="188.6" width="4.9" height="2.7" rx="1.4" transform="rotate(20 295.4 190.0)" fill="#24c624" stroke="#0f850f" stroke-width="0.5"/>
<rect x="294.0" y="189.0" width="2.2" height="0.7" rx="0.5" transform="rotate(20 295.4 190.0)" fill="#6be86b" opacity=".8"/>
<rect x="272.4" y="163.5" width="6.4" height="4.0" rx="1.8" transform="rotate(55 275.6 165.5)" fill="#24c624" stroke="#0f850f" stroke-width="0.5"/>
<rect x="273.8" y="164.0" width="2.9" height="1.1" rx="0.5" transform="rotate(55 275.6 165.5)" fill="#6be86b" opacity=".8"/>
<rect x="304.2" y="173.5" width="5.0" height="3.0" rx="1.4" transform="rotate(20 306.7 175.0)" fill="#24c624" stroke="#0f850f" stroke-width="0.5"/>
<rect x="305.3" y="173.9" width="2.3" height="0.8" rx="0.5" transform="rotate(20 306.7 175.0)" fill="#6be86b" opacity=".8"/>
<rect x="263.6" y="146.7" width="5.2" height="3.7" rx="1.4" transform="rotate(55 266.2 148.5)" fill="#24c624" stroke="#0f850f" stroke-width="0.5"/>
<rect x="264.8" y="147.1" width="2.3" height="1.0" rx="0.5" transform="rotate(55 266.2 148.5)" fill="#6be86b" opacity=".8"/>
<rect x="205.6" y="132.0" width="5.3" height="3.2" rx="1.5" transform="rotate(20 208.2 133.6)" fill="#24c624" stroke="#0f850f" stroke-width="0.5"/>
<rect x="206.7" y="132.4" width="2.4" height="0.9" rx="0.5" transform="rotate(20 208.2 133.6)" fill="#6be86b" opacity=".8"/>
<rect x="217.6" y="128.0" width="5.1" height="3.2" rx="1.4" transform="rotate(55 220.2 129.6)" fill="#24c624" stroke="#0f850f" stroke-width="0.5"/>
<rect x="218.8" y="128.4" width="2.3" height="0.9" rx="0.5" transform="rotate(55 220.2 129.6)" fill="#6be86b" opacity=".8"/>
<rect x="210.8" y="128.8" width="2.8" height="1.6" rx="0.8" transform="rotate(20 212.2 129.6)" fill="#24c624" stroke="#0f850f" stroke-width="0.5"/>
<rect x="211.3" y="137.6" width="2.7" height="1.7" rx="0.7" transform="rotate(0 212.7 138.4)" fill="#24c624" stroke="#0f850f" stroke-width="0.5"/>
<rect x="302.2" y="177.4" width="5.6" height="3.9" rx="1.5" transform="rotate(20 305.0 179.4)" fill="#24c624" stroke="#0f850f" stroke-width="0.5"/>
<rect x="303.5" y="177.9" width="2.5" height="1.1" rx="0.5" transform="rotate(20 305.0 179.4)" fill="#6be86b" opacity=".8"/>
<rect x="311.0" y="175.7" width="4.9" height="3.3" rx="1.4" transform="rotate(55 313.5 177.4)" fill="#24c624" stroke="#0f850f" stroke-width="0.5"/>
<rect x="312.1" y="176.2" width="2.2" height="0.9" rx="0.5" transform="rotate(55 313.5 177.4)" fill="#6be86b" opacity=".8"/>
<rect x="319.1" y="174.9" width="5.1" height="3.0" rx="1.4" transform="rotate(-15 321.7 176.4)" fill="#24c624" stroke="#0f850f" stroke-width="0.5"/>
<rect x="320.3" y="175.3" width="2.3" height="0.8" rx="0.5" transform="rotate(-15 321.7 176.4)" fill="#6be86b" opacity=".8"/>
<rect x="295.9" y="182.0" width="4.2" height="3.2" rx="1.2" transform="rotate(20 298.0 183.6)" fill="#24c624" stroke="#0f850f" stroke-width="0.5"/>
<rect x="307.8" y="184.7" width="4.3" height="2.5" rx="1.2" transform="rotate(20 310.0 186.0)" fill="#24c624" stroke="#0f850f" stroke-width="0.5"/>
<rect x="315.8" y="188.3" width="4.3" height="2.6" rx="1.2" transform="rotate(55 318.0 189.6)" fill="#24c624" stroke="#0f850f" stroke-width="0.5"/>
<rect x="294.7" y="194.8" width="4.7" height="3.3" rx="1.3" transform="rotate(-15 297.0 196.4)" fill="#24c624" stroke="#0f850f" stroke-width="0.5"/>
<rect x="221.9" y="148.8" width="4.1" height="2.4" rx="1.1" transform="rotate(20 224.0 150.0)" fill="#24c624" stroke="#0f850f" stroke-width="0.5"/>
<rect x="219.9" y="159.1" width="4.2" height="2.6" rx="1.2" transform="rotate(20 222.0 160.4)" fill="#24c624" stroke="#0f850f" stroke-width="0.5"/>
<rect x="225.0" y="165.2" width="4.0" height="2.6" rx="1.1" transform="rotate(20 227.0 166.5)" fill="#24c624" stroke="#0f850f" stroke-width="0.5"/>
<rect x="244.7" y="162.1" width="4.6" height="2.9" rx="1.3" transform="rotate(-15 247.0 163.5)" fill="#24c624" stroke="#0f850f" stroke-width="0.5"/>
<rect x="236.3" y="149.2" width="3.5" height="2.8" rx="1.0" transform="rotate(0 238.0 150.6)" fill="#24c624" stroke="#0f850f" stroke-width="0.5"/>
<rect x="254.5" y="148.4" width="3.0" height="2.1" rx="0.8" transform="rotate(-15 256.0 149.4)" fill="#24c624" stroke="#0f850f" stroke-width="0.5"/>
<rect x="288.7" y="172.1" width="4.6" height="2.6" rx="1.3" transform="rotate(55 291.0 173.4)" fill="#24c624" stroke="#0f850f" stroke-width="0.5"/>
<rect x="279.4" y="175.9" width="3.1" height="2.3" rx="0.9" transform="rotate(20 281.0 177.0)" fill="#24c624" stroke="#0f850f" stroke-width="0.5"/>
<rect x="261.5" y="165.0" width="3.0" height="2.0" rx="0.8" transform="rotate(-15 263.0 166.0)" fill="#24c624" stroke="#0f850f" stroke-width="0.5"/>
<rect x="244.5" y="169.5" width="3.0" height="1.9" rx="0.8" transform="rotate(20 246.0 170.4)" fill="#24c624" stroke="#0f850f" stroke-width="0.5"/>
<rect x="219.6" y="166.3" width="3.8" height="2.2" rx="1.0" transform="rotate(20 221.5 167.4)" fill="#24c624" stroke="#0f850f" stroke-width="0.5"/>
<rect x="208.5" y="169.4" width="3.1" height="2.4" rx="0.8" transform="rotate(-15 210.0 170.6)" fill="#24c624" stroke="#0f850f" stroke-width="0.5"/>
<rect x="227.5" y="177.4" width="3.0" height="2.1" rx="0.8" transform="rotate(0 229.0 178.4)" fill="#24c624" stroke="#0f850f" stroke-width="0.5"/>
<rect x="249.4" y="184.7" width="3.3" height="1.8" rx="0.9" transform="rotate(55 251.0 185.6)" fill="#24c624" stroke="#0f850f" stroke-width="0.5"/>
<rect x="265.7" y="189.7" width="2.6" height="1.9" rx="0.7" transform="rotate(20 267.0 190.6)" fill="#24c624" stroke="#0f850f" stroke-width="0.5"/>
<path d="M230.8 170.6L228.5 170.6L227.2 172.2L227.2 170.4L225.2 169.4L227.5 169.4L228.8 167.8L228.8 169.6z" fill="#24c624" stroke="#0f850f" stroke-width="0.3"/>
<path d="M238.8 161.2L236.5 161.2L235.2 162.8L235.2 161.0L233.2 160.0L235.5 160.0L236.8 158.4L236.8 160.2z" fill="#24c624" stroke="#0f850f" stroke-width="0.3"/>
<path d="M249.8 154.0L247.5 154.0L246.2 155.6L246.2 153.8L244.2 152.8L246.5 152.8L247.8 151.2L247.8 153.0z" fill="#24c624" stroke="#0f850f" stroke-width="0.3"/>
<path d="M260.8 163.2L258.5 163.2L257.2 164.8L257.2 163.0L255.2 162.0L257.5 162.0L258.8 160.4L258.8 162.2z" fill="#24c624" stroke="#0f850f" stroke-width="0.3"/>
<path d="M266.8 178.6L264.5 178.6L263.2 180.2L263.2 178.4L261.2 177.4L263.5 177.4L264.8 175.8L264.8 177.6z" fill="#24c624" stroke="#0f850f" stroke-width="0.3"/>
<path d="M278.8 173.2L276.5 173.2L275.2 174.8L275.2 173.0L273.2 172.0L275.5 172.0L276.8 170.4L276.8 172.2z" fill="#24c624" stroke="#0f850f" stroke-width="0.3"/>
<path d="M290.8 168.6L288.5 168.6L287.2 170.2L287.2 168.4L285.2 167.4L287.5 167.4L288.8 165.8L288.8 167.6z" fill="#24c624" stroke="#0f850f" stroke-width="0.3"/>
<path d="M284.1 140.8L281.8 140.8L280.5 142.4L280.5 140.6L278.5 139.6L280.8 139.6L282.1 138.0L282.1 139.8z" fill="#24c624" stroke="#0f850f" stroke-width="0.3"/>
<path d="M298.8 151.6L296.5 151.6L295.2 153.2L295.2 151.4L293.2 150.4L295.5 150.4L296.8 148.8L296.8 150.6z" fill="#24c624" stroke="#0f850f" stroke-width="0.3"/>
<path d="M274.8 184.2L272.5 184.2L271.2 185.8L271.2 184.0L269.2 183.0L271.5 183.0L272.8 181.4L272.8 183.2z" fill="#24c624" stroke="#0f850f" stroke-width="0.3"/>
<path d="M286.8 191.0L284.5 191.0L283.2 192.6L283.2 190.8L281.2 189.8L283.5 189.8L284.8 188.2L284.8 190.0z" fill="#24c624" stroke="#0f850f" stroke-width="0.3"/>
<path d="M302.8 171.2L300.5 171.2L299.2 172.8L299.2 171.0L297.2 170.0L299.5 170.0L300.8 168.4L300.8 170.2z" fill="#24c624" stroke="#0f850f" stroke-width="0.3"/></g>
<use href="#mg" transform="translate(161.2,59.0)"/>
<use href="#mg" transform="translate(322.4,118.0)"/>
<use href="#mg" transform="translate(483.6,177.0)"/>
<path d="M799.1 334.4L796.1 334.4L794.5 336.5L794.5 334.1L791.9 332.8L794.9 332.8L796.5 330.7L796.5 333.1z" fill="#24c624" stroke="#0f850f" stroke-width="0.3"/>
<rect x="815.2" y="362.2" width="3.6" height="2.6" rx="1.0" transform="rotate(20 817.0 363.5)" fill="#24c624" stroke="#0f850f" stroke-width="0.5"/>
<path d="M96 416.6A14.8 17 0 0 1 125.4 416.6Q110.6 419.6 96 416.6z" fill="#b9b5a8" opacity=".55"/>
<path d="M102.6 415.6L110.3 403.4L118.4 415.6Q110.3 417.6 102.6 415.6z" fill="#8d897f" opacity=".6"/>
<path d="M110.3 409.6L95 414.9" stroke="#7a1414" stroke-width="2.1"/>
<ellipse cx="93.6" cy="415.3" rx="3.1" ry="2.5" fill="#cf1616"/>
<path d="M110.3 409.4L127 414.9" stroke="#1414ee" stroke-width="2.5"/>
<path d="M124.6 413l5.4 0.3v3.6l-4.6 0.4z" fill="#141470"/>
<rect x="108.5" y="397" width="3.8" height="12.8" fill="#1fc41f"/><rect x="109" y="397" width="1.3" height="12.6" fill="#5fe85f"/>
<path d="M105.2 397.8Q105.6 394.3 110.4 394.2Q115.2 394.3 115.6 397.8Q110.4 399.4 105.2 397.8z" fill="#1cc81c"/>
</g>
<g id="icons" filter="url(#soft2)">
<rect x="4.4" y="30.1" width="1.2" height="1" fill="#555"/>
<rect x="4.4" y="32.3" width="1.2" height="1" fill="#555"/>
<rect x="4.4" y="34.5" width="1.2" height="1" fill="#555"/>
<rect x="4.4" y="36.7" width="1.2" height="1" fill="#555"/>
<rect x="358.7" y="30.1" width="1.2" height="1" fill="#555"/>
<rect x="358.7" y="32.3" width="1.2" height="1" fill="#555"/>
<rect x="358.7" y="34.5" width="1.2" height="1" fill="#555"/>
<rect x="358.7" y="36.7" width="1.2" height="1" fill="#555"/>
<rect x="513.7" y="30.1" width="1.2" height="1" fill="#555"/>
<rect x="513.7" y="32.3" width="1.2" height="1" fill="#555"/>
<rect x="513.7" y="34.5" width="1.2" height="1" fill="#555"/>
<rect x="513.7" y="36.7" width="1.2" height="1" fill="#555"/>
<rect x="582.2" y="30.1" width="1.2" height="1" fill="#555"/>
<rect x="582.2" y="32.3" width="1.2" height="1" fill="#555"/>
<rect x="582.2" y="34.5" width="1.2" height="1" fill="#555"/>
<rect x="582.2" y="36.7" width="1.2" height="1" fill="#555"/>
<rect x="655.1" y="30.1" width="1.2" height="1" fill="#555"/>
<rect x="655.1" y="32.3" width="1.2" height="1" fill="#555"/>
<rect x="655.1" y="34.5" width="1.2" height="1" fill="#555"/>
<rect x="655.1" y="36.7" width="1.2" height="1" fill="#555"/>
<rect x="4.4" y="43.4" width="1.2" height="1" fill="#555"/>
<rect x="4.4" y="45.6" width="1.2" height="1" fill="#555"/>
<rect x="4.4" y="47.8" width="1.2" height="1" fill="#555"/>
<rect x="150.4" y="43.4" width="1.2" height="1" fill="#555"/>
<rect x="150.4" y="45.6" width="1.2" height="1" fill="#555"/>
<rect x="150.4" y="47.8" width="1.2" height="1" fill="#555"/>
<rect x="522.1" y="43.4" width="1.2" height="1" fill="#555"/>
<rect x="522.1" y="45.6" width="1.2" height="1" fill="#555"/>
<rect x="522.1" y="47.8" width="1.2" height="1" fill="#555"/>
<rect x="682.9" y="43.4" width="1.2" height="1" fill="#555"/>
<rect x="682.9" y="45.6" width="1.2" height="1" fill="#555"/>
<rect x="682.9" y="47.8" width="1.2" height="1" fill="#555"/>
<rect x="4.4" y="55.5" width="1.2" height="1" fill="#555"/>
<rect x="4.4" y="57.7" width="1.2" height="1" fill="#555"/>
<rect x="4.4" y="59.9" width="1.2" height="1" fill="#555"/>
<rect x="325.9" y="55.5" width="1.2" height="1" fill="#555"/>
<rect x="325.9" y="57.7" width="1.2" height="1" fill="#555"/>
<rect x="325.9" y="59.9" width="1.2" height="1" fill="#555"/>
<rect x="360.4" y="55.5" width="1.2" height="1" fill="#555"/>
<rect x="360.4" y="57.7" width="1.2" height="1" fill="#555"/>
<rect x="360.4" y="59.9" width="1.2" height="1" fill="#555"/>
<rect x="29.7" y="28.2" width="16.3" height="10.3" rx="1.2" fill="#fdd766" stroke="#e9b936" stroke-width="0.8"/>
<rect x="46.0" y="28.2" width="10.0" height="10.3" rx="1.2" fill="#fdd766" stroke="#e9b936" stroke-width="0.8"/>
<rect x="58.0" y="28.2" width="16.0" height="10.3" rx="1.2" fill="#fdd766" stroke="#e9b936" stroke-width="0.8"/>
<rect x="74.0" y="28.2" width="10.0" height="10.3" rx="1.2" fill="#fdd766" stroke="#e9b936" stroke-width="0.8"/>
<rect x="85.5" y="28.2" width="15.9" height="10.3" rx="1.2" fill="#fdd766" stroke="#e9b936" stroke-width="0.8"/>
<rect x="101.4" y="28.2" width="10.9" height="10.3" rx="1.2" fill="#fdd766" stroke="#e9b936" stroke-width="0.8"/>
<rect x="234.4" y="28.2" width="16.6" height="10.3" rx="1.2" fill="#fdd766" stroke="#e9b936" stroke-width="0.8"/>
<rect x="395.7" y="28.2" width="15.7" height="10.3" rx="1.2" fill="#fdd766" stroke="#e9b936" stroke-width="0.8"/>
<rect x="27.0" y="30.0" width="1.1" height="6.7" fill="#f1f1e6"/>
<rect x="26.4" y="30.0" width="0.6" height="6.7" fill="#a2a2a2"/>
<rect x="148.2" y="30.0" width="1.1" height="6.7" fill="#f1f1e6"/>
<rect x="147.6" y="30.0" width="0.6" height="6.7" fill="#a2a2a2"/>
<rect x="194.8" y="30.0" width="1.1" height="6.7" fill="#f1f1e6"/>
<rect x="194.2" y="30.0" width="0.6" height="6.7" fill="#a2a2a2"/>
<rect x="230.5" y="30.0" width="1.1" height="6.7" fill="#f1f1e6"/>
<rect x="229.9" y="30.0" width="0.6" height="6.7" fill="#a2a2a2"/>
<rect x="280.1" y="30.0" width="1.1" height="6.7" fill="#f1f1e6"/>
<rect x="279.5" y="30.0" width="0.6" height="6.7" fill="#a2a2a2"/>
<rect x="302.3" y="30.0" width="1.1" height="6.7" fill="#f1f1e6"/>
<rect x="301.7" y="30.0" width="0.6" height="6.7" fill="#a2a2a2"/>
<rect x="323.5" y="30.0" width="1.1" height="6.7" fill="#f1f1e6"/>
<rect x="322.9" y="30.0" width="0.6" height="6.7" fill="#a2a2a2"/>
<rect x="11.0" y="30.0" width="10.0" height="6.8" fill="#dfe5ef" stroke="#3b4f6e" stroke-width="1.1"/>
<path d="M16.0 30.0v6.8M11.0 33.4h10.0" stroke="#3b4f6e" stroke-width="1" fill="none"/>
<path d="M32.5 33.4H43.0M32.5 32.0v2.8" stroke="#e02020" stroke-width="0.9" fill="none"/>
<path d="M44.0 33.4l-3-1.5v3z" fill="#e02020"/>
<path d="M61.0 34.8L66.2 31.0L71.5 34.8z" fill="#9fb0c8" stroke="#3b4f6e" stroke-width="0.8"/>
<path d="M61.0 36.2H71.5" stroke="#a07840" stroke-width="1" stroke-dasharray="1.5 1"/>
<rect x="89.0" y="30.5" width="9.5" height="4.3" rx="1" fill="#c9d3e2" stroke="#3b4f6e" stroke-width="1.2"/>
<rect x="91.0" y="32.0" width="5.5" height="1.3" fill="#6e7f9b"/>
<path d="M91.8 35.8h4" stroke="#3b4f6e" stroke-width="1.2"/>
<path d="M115.4 35.8L119.6 32.0L123.9 35.8z" fill="none" stroke="#8a8a8a" stroke-width="0.9"/>
<path d="M123.0 30.0l3 3m0-3l-3 3" stroke="#8a8a8a" stroke-width="0.8"/>
<path d="M135.1 30.0V36.8M135.1 31.5H142.5V33.9H135.1M135.1 35.4H141.5" fill="none" stroke="#8a8a8a" stroke-width="1"/>
<path d="M156.3 30.0H160.0L162.0 32.0V36.8H156.3z" fill="#ababab" stroke="#818181" stroke-width="1"/>
<path d="M156.3 33.6H162.0" stroke="#8a8a8a" stroke-width="0.7"/>
<path d="M171.0 30.0H177.5V35.8H171.0z" fill="#484848"/>
<path d="M172.6 30.0V36.8M174.4 30.0V35.8" stroke="#6a6a6a" stroke-width="0.6"/>
<rect x="176.9" y="32.8" width="5.9" height="3.8" rx="0.8" fill="#bdbdbd" stroke="#777" stroke-width="0.9"/>
<path d="M198.2 30.0V36.8M210.4 30.0V36.8" stroke="#666" stroke-width="1"/>
<rect x="200.0" y="31.4" width="3.7" height="4" fill="#b9b9b9" stroke="#666" stroke-width="0.7"/><rect x="204.9" y="31.4" width="3.7" height="4" fill="#b9b9b9" stroke="#666" stroke-width="0.7"/>
<path d="M215.3 31.0H225.8V33.9Q225.8 36.8 220.6 36.8Q215.3 36.8 215.3 33.9z" fill="#f2f5fa" stroke="#2a4a88" stroke-width="1.3"/>
<path d="M217.8 32.6h5.6M220.6 32.6v3.6" stroke="#e02020" stroke-width="1.3"/>
<path d="M242.8 30.5V34.1L237.5 36.2M242.8 34.1L248.0 35.8" stroke="#333" stroke-width="0.8" fill="none"/>
<path d="M237.5 30.5l2.6 3m0-3l-2.6 3M245.2 30.5l1.4 1.6l1.4-1.6m-1.4 1.6v1.6M239.8 34.0h2.4l-2.4 2.6h2.4" stroke="#e02020" stroke-width="0.9" fill="none"/>
<path d="M253.8 32.6H266.0" stroke="#3b5b92" stroke-width="0.9"/>
<path d="M259.4 31.0V33.9" stroke="#e02020" stroke-width="1.2"/><path d="M257.9 35.4h4.5" stroke="#e02020" stroke-width="1.6"/>
<rect x="289.0" y="30.0" width="2.6" height="6.8" rx="1" fill="#e8edf6" stroke="#2a4a88" stroke-width="1"/><rect x="295.0" y="30.0" width="2.6" height="6.8" rx="1" fill="#e8edf6" stroke="#2a4a88" stroke-width="1"/>
<path d="M308.0 30.0V36.8M310.0 30.5V36.2" stroke="#3b4f6e" stroke-width="0.9"/>
<path d="M310.0 33.4H316.7" stroke="#3b4f6e" stroke-width="1.2"/><path d="M318.7 33.4l-3.2-1.8v3.6z" fill="#3b4f6e"/>
<path d="M329.1 36.2Q328.6 33.4 331.0 31.0H334.3V36.2z" fill="#2c4770"/>
<path d="M341.2 36.2Q341.7 33.4 339.3 31.0H335.9V36.2z" fill="#2c4770"/>
<rect x="333.6" y="31.9" width="3" height="2.4" fill="#2c4770"/>
<path d="M364.0 34.4l2.4 1.6M364.0 36.0l2.4-1.6M371.7 34.4l2.6 1.6M371.7 36.0l2.6-1.6" stroke="#e02020" stroke-width="1.1"/>
<path d="M367.9 35.8L371.9 31.0" stroke="#23427a" stroke-width="2.8" stroke-linecap="round"/>
<path d="M368.8 34.4L371.2 32.0" stroke="#dfe8f5" stroke-width="0.8"/>
<path d="M381.0 32.5L383.5 30.5H392.6L390.6 32.5z" fill="#aebdd6" stroke="#3b4f6e" stroke-width="0.8"/>
<rect x="381.0" y="32.5" width="9.6" height="3.3" fill="#f2f5fa" stroke="#3b4f6e" stroke-width="1.1"/>
<path d="M390.6 35.8L392.6 33.8V30.5" fill="none" stroke="#3b4f6e" stroke-width="0.9"/>
<path d="M399.5 31.8H407.5" stroke="#2d405e" stroke-width="2.6" stroke-linecap="round"/>
<path d="M403.5 32.0V36.8" stroke="#2d405e" stroke-width="2.6"/>
<path d="M404.4 33.4V36.8" stroke="#7f95b8" stroke-width="0.8"/>
<path d="M49.2 32.6h3.6l-1.8 2z" fill="#333"/>
<path d="M77.2 32.6h3.6l-1.8 2z" fill="#333"/>
<path d="M105.0 32.6h3.6l-1.8 2z" fill="#333"/>
<path d="M188.0 32.6h3.6l-1.8 2z" fill="#999"/>
<path d="M271.5 32.6h3.6l-1.8 2z" fill="#777"/>
<rect x="346.4" y="34.6" width="4" height="0.9" fill="#222"/>
<path d="M346.4 36.4h4l-2 2.2z" fill="#222"/>
<path d="M347.4 37.4h4l-2 2.2z" fill="#fff" opacity=".55"/>
<rect x="414.8" y="34.6" width="4" height="0.9" fill="#222"/>
<path d="M414.8 36.4h4l-2 2.2z" fill="#222"/>
<path d="M415.8 37.4h4l-2 2.2z" fill="#fff" opacity=".55"/>
<rect x="526.9" y="30.0" width="2.6" height="6.8" rx="1" fill="#eef2f8" stroke="#3b4f6e" stroke-width="1"/>
<path d="M519.0 33.4h6.4" stroke="#3b4f6e" stroke-width="1.6"/>
<circle cx="521.5" cy="33.4" r="1.3" fill="#3b4f6e"/>
<rect x="543.8" y="30.0" width="2.4" height="6.8" fill="#cfd8e6" stroke="#3b4f6e" stroke-width="0.9"/>
<path d="M536.0 32.4h7.0M538.0 34.4h5.0" stroke="#3b4f6e" stroke-width="1.2"/>
<path d="M536.0 33.4l3-2.4v4.8z" fill="#3b4f6e"/>
<rect x="554.6" y="30.0" width="9.4" height="3.8" rx="0.8" fill="#bcd0ea" stroke="#3b4f6e" stroke-width="1.1"/>
<path d="M553.6 36.1H565.0M556.8 34.8h5" stroke="#3b4f6e" stroke-width="1.2"/>
<path d="M587.7 30.5H600.3L597.3 33.4L600.3 36.2H587.7L590.7 33.4z" fill="#e0aa18" stroke="#a87808" stroke-width="0.6"/>
<path d="M589.7 32.0h8.6" stroke="#ffe27a" stroke-width="1.2"/>
<rect x="615.6" y="30.5" width="12.6" height="5.8" fill="#4b88d8"/>
<rect x="615.6" y="30.5" width="12.6" height="2" fill="#a9cbf2"/>
<path d="M615.6 36.2V34.9Q621.9 31.4 628.2 34.9V36.2z" fill="#0c1828"/>
<path d="M661.0 33.9h2.5l1.3-3l1.6 5.5l1.5-4.5l1.2 2.6l1.2-1.2h3" fill="none" stroke="#e02020" stroke-width="1"/>
<path d="M679.0 35.8q2.2 0 2.6-3.5t3-3.5h1" fill="none" stroke="#8c8c8c" stroke-width="1.1"/>
<ellipse cx="687.0" cy="34.8" rx="2.4" ry="1.7" fill="none" stroke="#333" stroke-width="0.9"/><circle cx="687.0" cy="34.8" r="0.8" fill="#333"/>
<path d="M605.7 32.6h3.6l-1.8 2z" fill="#666"/>
<path d="M633.2 32.6h3.6l-1.8 2z" fill="#666"/>
<rect x="570.6" y="34.6" width="4" height="0.9" fill="#222"/>
<path d="M570.6 36.4h4l-2 2.2z" fill="#222"/>
<path d="M571.6 37.4h4l-2 2.2z" fill="#fff" opacity=".55"/>
<rect x="643.6" y="34.6" width="4" height="0.9" fill="#222"/>
<path d="M643.6 36.4h4l-2 2.2z" fill="#222"/>
<path d="M644.6 37.4h4l-2 2.2z" fill="#fff" opacity=".55"/>
<rect x="695.3" y="34.6" width="4" height="0.9" fill="#222"/>
<path d="M695.3 36.4h4l-2 2.2z" fill="#222"/>
<path d="M696.3 37.4h4l-2 2.2z" fill="#fff" opacity=".55"/>
<rect x="60.8" y="43.3" width="1.1" height="5.9" fill="#f1f1e6"/>
<rect x="60.2" y="43.3" width="0.6" height="5.9" fill="#a2a2a2"/>
<rect x="115.7" y="43.3" width="1.1" height="5.9" fill="#f1f1e6"/>
<rect x="115.1" y="43.3" width="0.6" height="5.9" fill="#a2a2a2"/>
<rect x="172.1" y="43.3" width="1.1" height="5.9" fill="#f1f1e6"/>
<rect x="171.5" y="43.3" width="0.6" height="5.9" fill="#a2a2a2"/>
<rect x="221.5" y="43.3" width="1.1" height="5.9" fill="#f1f1e6"/>
<rect x="220.9" y="43.3" width="0.6" height="5.9" fill="#a2a2a2"/>
<rect x="259.8" y="43.3" width="1.1" height="5.9" fill="#f1f1e6"/>
<rect x="259.2" y="43.3" width="0.6" height="5.9" fill="#a2a2a2"/>
<path d="M12.2 42.9H17.8L20.3 45.4V49.6H12.2z" fill="#eef2f8" stroke="#3b4f6e" stroke-width="1.1"/>
<path d="M26.8 49.6L27.8 44.4H32.3l1 1.2H37.5V46.2" fill="#dfe5ef" stroke="#3b4f6e" stroke-width="1"/>
<path d="M26.8 49.6L29.3 46.2H39.0L36.5 49.6z" fill="#eef2f8" stroke="#3b4f6e" stroke-width="1"/>
<rect x="44.6" y="43.4" width="10.3" height="5.8" rx="0.8" fill="#dbe2ee" stroke="#3b4f6e" stroke-width="1.1"/>
<rect x="46.6" y="46.8" width="6.3" height="2.4" fill="#f6f8fb" stroke="#3b4f6e" stroke-width="0.6"/>
<path d="M68.4 42.9L74.8 48.6M75.3 42.9L68.9 48.6" stroke="#8a8a8a" stroke-width="1.3"/>
<circle cx="69.2" cy="48.4" r="1.3" fill="none" stroke="#8a8a8a" stroke-width="0.8"/><circle cx="74.5" cy="48.4" r="1.3" fill="none" stroke="#8a8a8a" stroke-width="0.8"/>
<rect x="83.0" y="42.9" width="6.6" height="4.8" fill="#e4e9f2" stroke="#3b4f6e" stroke-width="1"/>
<rect x="87.2" y="44.9" width="6.6" height="4.8" fill="#eef2f8" stroke="#3b4f6e" stroke-width="1"/>
<rect x="101.0" y="43.9" width="7.5" height="5.3" fill="#d4d4d4" stroke="#8a8a8a" stroke-width="1"/>
<rect x="105.0" y="45.8" width="6.0" height="3.4" fill="#ececec" stroke="#8a8a8a" stroke-width="0.8"/>
<rect x="103.0" y="42.9" width="3.5" height="2" fill="#8a8a8a"/>
<path d="M124.3 46.0V43.1H130.0V46.0" fill="#fff" stroke="#3b4f6e" stroke-width="0.8"/>
<ellipse cx="127.2" cy="47.4" rx="5.9" ry="2.3" fill="#8fa3c4" stroke="#3b4f6e" stroke-width="0.9"/>
<path d="M123.3 47.0H131.0" stroke="#f4f6fa" stroke-width="1.2"/>
<rect x="156.0" y="42.9" width="10.6" height="6.8" rx="0.8" fill="#5b6f90" stroke="#3b4f6e" stroke-width="1"/>
<path d="M157.3 44.5h1.2M159.5 44.5H165.3" stroke="#e8eef8" stroke-width="1.1"/>
<path d="M157.3 46.9h1.2M159.5 46.9H165.3" stroke="#e8eef8" stroke-width="1.1"/>
<path d="M157.3 49.2h1.2M159.5 49.2H165.3" stroke="#e8eef8" stroke-width="1.1"/>
<path d="M178.0 42.9H183.7L185.9 45.4V49.6H178.0z" fill="#eef2f8" stroke="#3b4f6e" stroke-width="1.1"/>
<ellipse cx="186.1" cy="47.8" rx="3.2" ry="2.2" fill="#e02020"/>
<path d="M205.0 49.6L211.0 43.9L217.0 42.9M209.0 49.6L212.0 46.2L216.0 49.6M207.0 46.2H217.0" fill="none" stroke="#3b4f6e" stroke-width="1.1"/>
<circle cx="212.5" cy="43.9" r="1.2" fill="#3b4f6e"/>
<path d="M226.6 47.2L232.3 42.9L238.0 47.8L233.3 49.6z" fill="#cfcfcf" stroke="#8a8a8a" stroke-width="0.9"/>
<path d="M232.3 42.9L233.3 49.6" stroke="#8a8a8a" stroke-width="0.7"/>
<path d="M243.6 47.8L248.6 42.9L255.5 47.2L249.6 49.6z" fill="#e8edf5" stroke="#3b4f6e" stroke-width="1"/>
<rect x="249.6" y="46.2" width="3.2" height="2.6" fill="#fff" stroke="#3b4f6e" stroke-width="0.6"/>
<path d="M266.5 42.9V49.6M269.0 42.9V49.6" stroke="#8a8a8a" stroke-width="1"/>
<path d="M269.0 46.2L277.3 43.9M269.0 46.2H277.3M269.0 46.2L277.3 48.6" stroke="#8a8a8a" stroke-width="0.8" opacity=".7"/>
<path d="M195.2 45.5h3.6l-1.8 2z" fill="#666"/>
<rect x="138.4" y="47.5" width="4" height="0.9" fill="#222"/>
<path d="M138.4 49.2h4l-2 2.2z" fill="#222"/>
<path d="M139.4 50.2h4l-2 2.2z" fill="#fff" opacity=".55"/>
<rect x="282.6" y="47.5" width="4" height="0.9" fill="#222"/>
<path d="M282.6 49.2h4l-2 2.2z" fill="#222"/>
<path d="M283.6 50.2h4l-2 2.2z" fill="#fff" opacity=".55"/>
<rect x="561.2" y="43.3" width="1.1" height="5.9" fill="#f1f1e6"/>
<rect x="560.6" y="43.3" width="0.6" height="5.9" fill="#a2a2a2"/>
<rect x="599.5" y="43.3" width="1.1" height="5.9" fill="#f1f1e6"/>
<rect x="598.9" y="43.3" width="0.6" height="5.9" fill="#a2a2a2"/>
<rect x="638.3" y="43.3" width="1.1" height="5.9" fill="#f1f1e6"/>
<rect x="637.7" y="43.3" width="0.6" height="5.9" fill="#a2a2a2"/>
<path d="M529.0 45.5L531.5 43.5H539.0V47.0L536.5 49.0H529.0z" fill="#9fb0c8" stroke="#2a4674" stroke-width="1"/>
<path d="M529.0 45.5H536.5V49.0M536.5 45.5L539.0 43.5" fill="none" stroke="#2a4674" stroke-width="0.9"/>
<path d="M546.0 45.5L548.5 43.5H556.0V47.0L553.5 49.0H546.0z" fill="#9fb0c8" stroke="#2a4674" stroke-width="1"/>
<path d="M546.0 45.5H553.5V49.0M553.5 45.5L556.0 43.5" fill="none" stroke="#2a4674" stroke-width="0.9"/>
<rect x="546.8" y="46.2" width="6.0" height="2.0" fill="#dfe6f2"/>
<path d="M567.4 45.5L569.9 43.5H577.4V47.0L574.9 49.0H567.4z" fill="#9fb0c8" stroke="#2a4674" stroke-width="1"/>
<path d="M567.4 45.5H574.9V49.0M574.9 45.5L577.4 43.5" fill="none" stroke="#2a4674" stroke-width="0.9"/>
<path d="M584.0 45.5L586.5 43.5H594.0V47.0L591.5 49.0H584.0z" fill="#9fb0c8" stroke="#2a4674" stroke-width="1"/>
<path d="M584.0 45.5H591.5V49.0M591.5 45.5L594.0 43.5" fill="none" stroke="#2a4674" stroke-width="0.9"/>
<rect x="584.8" y="46.2" width="6.0" height="2.0" fill="#dfe6f2"/>
<path d="M606.0 45.5L608.5 43.5H616.0V47.0L613.5 49.0H606.0z" fill="#9fb0c8" stroke="#2a4674" stroke-width="1"/>
<path d="M606.0 45.5H613.5V49.0M613.5 45.5L616.0 43.5" fill="none" stroke="#2a4674" stroke-width="0.9"/>
<path d="M623.0 45.5L625.5 43.5H633.0V47.0L630.5 49.0H623.0z" fill="#9fb0c8" stroke="#2a4674" stroke-width="1"/>
<path d="M623.0 45.5H630.5V49.0M630.5 45.5L633.0 43.5" fill="none" stroke="#2a4674" stroke-width="0.9"/>
<rect x="623.8" y="46.2" width="6.0" height="2.0" fill="#dfe6f2"/>
<path d="M649.0 43.0L653.4 45.2V47.0L649.0 49.5L644.5 47.0V45.2z" fill="#b8c8de" stroke="#2a4674" stroke-width="1"/>
<path d="M644.5 45.2L649.0 46.2L653.4 45.2M649.0 46.2V49.5" fill="none" stroke="#2a4674" stroke-width="0.9"/>
<path d="M660.9 45.5h3.6l-1.8 2z" fill="#777"/>
<rect x="671.6" y="47.5" width="4" height="0.9" fill="#222"/>
<path d="M671.6 49.2h4l-2 2.2z" fill="#222"/>
<path d="M672.6 50.2h4l-2 2.2z" fill="#fff" opacity=".55"/>
<rect x="704.0" y="41.5" width="16.0" height="9.5" rx="1.2" fill="#fdd766" stroke="#e9b936" stroke-width="0.8"/>
<rect x="874.7" y="41.5" width="16.3" height="9.5" rx="1.2" fill="#fdd766" stroke="#e9b936" stroke-width="0.8"/>
<rect x="739.0" y="43.3" width="1.1" height="5.9" fill="#f1f1e6"/>
<rect x="738.4" y="43.3" width="0.6" height="5.9" fill="#a2a2a2"/>
<rect x="812.5" y="43.3" width="1.1" height="5.9" fill="#f1f1e6"/>
<rect x="811.9" y="43.3" width="0.6" height="5.9" fill="#a2a2a2"/>
<rect x="834.5" y="43.3" width="1.1" height="5.9" fill="#f1f1e6"/>
<rect x="833.9" y="43.3" width="0.6" height="5.9" fill="#a2a2a2"/>
<rect x="871.8" y="43.3" width="1.1" height="5.9" fill="#f1f1e6"/>
<rect x="871.2" y="43.3" width="0.6" height="5.9" fill="#a2a2a2"/>
<ellipse cx="693.1" cy="45.9" rx="3.2" ry="2.6" fill="#e8eef8" stroke="#2a4674" stroke-width="1.1"/>
<path d="M695.5 47.9L700.0 49.6" stroke="#2a4674" stroke-width="1.8"/>
<path d="M689.5 48.6l3-2.4" stroke="#6e86ad" stroke-width="1.3"/>
<ellipse cx="710.6" cy="45.9" rx="3.2" ry="2.6" fill="#e8eef8" stroke="#2a4674" stroke-width="1.1"/>
<path d="M713.0 47.9L717.5 49.6" stroke="#2a4674" stroke-width="1.8"/>
<path d="M707.0 48.6l3-2.4" stroke="#6e86ad" stroke-width="1.3"/>
<rect x="723.4" y="42.9" width="7.2" height="4.8" fill="#a8a8a8"/>
<ellipse cx="728.0" cy="45.9" rx="2.8" ry="2.3" fill="#e8eef8" stroke="#3b5b92" stroke-width="1"/>
<path d="M730.4 47.9L734.0 49.6" stroke="#3b5b92" stroke-width="1.6"/>
<path d="M746.5 46.8A4.2 2.4 0 0 1 753.5 44.9" fill="none" stroke="#1f3c6e" stroke-width="1.6"/>
<path d="M755.0 45.8A4.2 2.4 0 0 1 748.0 47.6" fill="none" stroke="#1f3c6e" stroke-width="1.6"/>
<path d="M756.0 42.9v4h-4z" fill="#1f3c6e"/><path d="M745.5 49.6v-4h4z" fill="#1f3c6e"/>
<path d="M767.4 42.9V49.6M762.5 46.2H772.3" stroke="#5a7098" stroke-width="1.2"/>
<ellipse cx="767.4" cy="46.2" rx="3.4" ry="1.9" fill="none" stroke="#5a7098" stroke-width="0.9"/>
<path d="M784.3 43.9V48.6M780.3 46.2H788.3" stroke="#1f3c6e" stroke-width="1.4"/>
<path d="M784.3 42.6l-2 2.3h4zM784.3 49.9l-2-2.3h4zM779.0 46.2l2.6-1.9v3.8zM789.6 46.2l-2.6-1.9v3.8z" fill="#1f3c6e"/>
<path d="M795.8 44.8h5" stroke="#1f3c6e" stroke-width="1.5"/><path d="M803.0 47.2h5M805.5 45.2v4" stroke="#1f3c6e" stroke-width="1.3"/>
<circle cx="820.0" cy="44.6" r="1.4" fill="#1f3c6e"/><circle cx="826.5" cy="44.6" r="1.4" fill="#1f3c6e"/>
<path d="M820.0 46.2V49.6M826.5 46.2V49.6" stroke="#1f3c6e" stroke-width="2"/>
<path d="M842.4 42.9V48.1l1.8-1.6l1.6 3l1.2-0.7l-1.5-2.9h2.6z" fill="#24426e" stroke="#1a2f50" stroke-width="0.4"/>
<rect x="854.0" y="42.9" width="6.0" height="4.8" fill="none" stroke="#888" stroke-width="0.7" stroke-dasharray="1 1"/>
<path d="M857.5 42.9V48.1l1.8-1.6l1.6 3l1.2-0.7l-1.5-2.9h2.6z" fill="#24426e"/>
<path d="M878.5 44.2V48.3A4.5 1.6 0 0 0 887.5 48.3V44.2" fill="#5b7096" stroke="#1d3153" stroke-width="1.1"/>
<ellipse cx="883.0" cy="44.2" rx="4.5" ry="1.5" fill="#dfe6f2" stroke="#1d3153" stroke-width="1"/>
<path d="M895.0 44.2V48.3A4.5 1.6 0 0 0 904.0 48.3V44.2" fill="none" stroke="#3b5b92" stroke-width="1.1"/>
<ellipse cx="899.5" cy="44.2" rx="4.5" ry="1.5" fill="none" stroke="#3b5b92" stroke-width="1"/>
<path d="M912.0 44.2V48.3A4.5 1.6 0 0 0 921.0 48.3V44.2" fill="none" stroke="#3b5b92" stroke-width="1.1"/>
<ellipse cx="916.5" cy="44.2" rx="4.5" ry="1.5" fill="none" stroke="#3b5b92" stroke-width="1"/>
<path d="M916.5 46.1V49.9M912.0 46.8H921.0" stroke="#3b5b92" stroke-width="0.7"/>
<path d="M929.0 44.2V48.3A4.5 1.6 0 0 0 938.0 48.3V44.2" fill="#fff" stroke="#51678c" stroke-width="1.1"/>
<ellipse cx="933.5" cy="44.2" rx="4.5" ry="1.5" fill="#dfe6f2" stroke="#51678c" stroke-width="1"/>
<path d="M946.0 44.2V48.3A4.4 1.6 0 0 0 954.7 48.3V44.2" fill="#e4e4e4" stroke="#aaa" stroke-width="1.1"/>
<ellipse cx="950.4" cy="44.2" rx="4.4" ry="1.5" fill="none" stroke="#aaa" stroke-width="1"/>
<rect x="948.0" y="45.2" width="4.7" height="3" fill="#c4c4c4"/>
<path d="M964.0 42.9V49.6M971.0 42.9V49.6" stroke="#3b5b92" stroke-width="1.2"/><path d="M967.5 42.9V49.6" stroke="#e02020" stroke-width="1.6"/>
<rect x="979.0" y="47.5" width="4" height="0.9" fill="#222"/>
<path d="M979.0 49.2h4l-2 2.2z" fill="#222"/>
<path d="M980.0 50.2h4l-2 2.2z" fill="#fff" opacity=".55"/>
<rect x="43.5" y="55.4" width="1.1" height="6.3" fill="#f1f1e6"/>
<rect x="42.9" y="55.4" width="0.6" height="6.3" fill="#a2a2a2"/>
<rect x="75.3" y="55.4" width="1.1" height="6.3" fill="#f1f1e6"/>
<rect x="74.7" y="55.4" width="0.6" height="6.3" fill="#a2a2a2"/>
<rect x="115.1" y="55.4" width="1.1" height="6.3" fill="#f1f1e6"/>
<rect x="114.5" y="55.4" width="0.6" height="6.3" fill="#a2a2a2"/>
<rect x="169.5" y="55.4" width="1.1" height="6.3" fill="#f1f1e6"/>
<rect x="168.9" y="55.4" width="0.6" height="6.3" fill="#a2a2a2"/>
<rect x="229.5" y="55.4" width="1.1" height="6.3" fill="#f1f1e6"/>
<rect x="228.9" y="55.4" width="0.6" height="6.3" fill="#a2a2a2"/>
<rect x="10.5" y="57.1" width="10.5" height="4.3" rx="1" fill="#c9d3e2" stroke="#3b4f6e" stroke-width="1.2"/>
<rect x="13.8" y="55.6" width="4" height="1.8" fill="#3b4f6e"/>
<ellipse cx="15.8" cy="59.8" rx="2.3" ry="1.7" fill="#8fa0bb" stroke="#3b4f6e" stroke-width="0.7"/>
<rect x="27.8" y="55.1" width="10.6" height="3.8" rx="0.8" fill="#bcd0ea" stroke="#3b4f6e" stroke-width="1.1"/>
<path d="M26.8 61.3H39.4M30.6 59.9h5" stroke="#3b4f6e" stroke-width="1.2"/>
<rect x="48.7" y="56.4" width="11.3" height="4.4" rx="1.6" fill="#e8e8f0" stroke="#3b4f6e" stroke-width="1"/>
<rect x="50.9" y="56.9" width="6.9" height="3.2" fill="#d81e1e"/>
<rect x="88.7" y="55.1" width="2.6" height="6.8" rx="1" fill="#eef2f8" stroke="#3b4f6e" stroke-width="1"/>
<path d="M80.8 58.5h6.4" stroke="#3b4f6e" stroke-width="1.6"/>
<circle cx="83.3" cy="58.5" r="1.3" fill="#3b4f6e"/>
<rect x="106.4" y="55.1" width="2.4" height="6.8" fill="#cfd8e6" stroke="#3b4f6e" stroke-width="0.9"/>
<path d="M98.5 57.5h7.1M100.5 59.5h5.1" stroke="#3b4f6e" stroke-width="1.2"/>
<path d="M98.5 58.5l3-2.4v4.8z" fill="#3b4f6e"/>
<ellipse cx="125.0" cy="60.3" rx="5.7" ry="1.8" fill="#dfe5ef" stroke="#556" stroke-width="0.9"/>
<path d="M125.0 55.6V59.5M122.5 57.8h5" stroke="#556" stroke-width="0.9"/>
<ellipse cx="142.1" cy="60.5" rx="6.1" ry="1.7" fill="#dfe5ef" stroke="#556" stroke-width="0.9"/>
<path d="M138.5 59.5V56.6H145.7V59.5M142.1 56.6V59.5" fill="none" stroke="#556" stroke-width="1"/>
<path d="M153.6 61.9V59.5Q157.0 57.5 159.3 59.3T165.0 59.5V61.9z" fill="#f6f8fb" stroke="#3b4f6e" stroke-width="0.9"/>
<path d="M156.1 57.0l5-1.5" stroke="#e02020" stroke-width="1.4"/>
<path d="M181.0 55.1V59.9" stroke="#e02020" stroke-width="1.5"/><circle cx="181.0" cy="60.4" r="1.7" fill="#e02020"/>
<path d="M181.0 55.1V57.5" stroke="#445" stroke-width="1.5"/>
<ellipse cx="208.5" cy="58.5" rx="4.5" ry="2.6" fill="#f4f6fa" stroke="#3b4f6e" stroke-width="1"/>
<path d="M208.5 58.5l2.5-1.6" stroke="#e02020" stroke-width="1"/>
<path d="M234.7 59.0H246.5Q245.5 61.9 243.0 61.9H237.2Q234.7 60.9 234.7 59.0z" fill="#d81e1e" stroke="#8a1010" stroke-width="0.6"/>
<path d="M238.1 55.1l2.3 3.5l2.3-3.5M240.4 58.6v2" stroke="#b01818" stroke-width="1" fill="none"/>
<circle cx="237.0" cy="60.7" r="1.3" fill="#f0c040" stroke="#333" stroke-width="0.5"/>
<path d="M251.7 58.5Q252.7 61.9 257.6 61.4H262.5Q264.0 59.5 262.5 58.5z" fill="#f2f5fa" stroke="#2d5fa8" stroke-width="1"/>
<path d="M253.2 58.5V56.1h2" stroke="#2d5fa8" stroke-width="1" fill="none"/>
<ellipse cx="271.8" cy="59.9" rx="3.4" ry="2" fill="#2f86e6" stroke="#1c4f9c" stroke-width="0.7"/><ellipse cx="277.2" cy="58.9" rx="3.4" ry="2" fill="#2f86e6" stroke="#1c4f9c" stroke-width="0.7"/>
<path d="M271.4 59.8L277.6 58.9" stroke="#8fc4ff" stroke-width="1.1"/><path d="M269.4 55.8l2 1.4" stroke="#24426e" stroke-width="0.8"/>
<ellipse cx="292.0" cy="59.5" rx="6.0" ry="2.7" fill="#2b4a78" stroke="#1d3456" stroke-width="0.6"/>
<path d="M287.5 58.0q2-2.5 5-1.5" stroke="#2d6fcc" stroke-width="1.5" fill="none"/>
<rect x="331.2" y="56.6" width="12.2" height="3.8" fill="#d81e1e" stroke="#901010" stroke-width="0.6"/>
<path d="M333.7 58.5h7.2" stroke="#fff" stroke-width="1.4" stroke-dasharray="1.6 0.8"/>
<path d="M369.7 56.1V61.4l1.8-1.6l1.4 2.4l1.1-0.6l-1.3-2.4h2.4z" fill="#24426e"/>
<path d="M373.5 55.1l2 1.5l-2.5 2.5" stroke="#e02020" stroke-width="1.1" fill="none"/>
<rect x="383.0" y="57.5" width="8.0" height="3.4" rx="0.6" fill="none" stroke="#8c8c8c" stroke-width="1.1"/>
<rect x="385.0" y="59.1" width="4.0" height="0.4" fill="#9a9a9a"/>
<rect x="392.1" y="59.9" width="1.2" height="1.2" fill="#8c8c8c"/>
<path d="M401.0 55.1V61.4H408.2V58.0H401.0" fill="none" stroke="#8c8c8c" stroke-width="1.1"/>
<rect x="417.0" y="57.5" width="7.8" height="3.4" rx="0.6" fill="none" stroke="#8c8c8c" stroke-width="1.1"/>
<path d="M423.6 58.0L429.0 55.6" stroke="#8c8c8c" stroke-width="0.9"/><rect x="427.8" y="55.1" width="1.3" height="1.3" fill="#777"/>
<path d="M66.4 57.8h3.6l-1.8 2z" fill="#666"/>
<path d="M192.2 57.8h3.6l-1.8 2z" fill="#666"/>
<path d="M220.2 57.8h3.6l-1.8 2z" fill="#666"/>
<path d="M303.6 57.8h3.6l-1.8 2z" fill="#888"/>
<rect x="314.0" y="59.8" width="4" height="0.9" fill="#222"/>
<path d="M314.0 61.5h4l-2 2.2z" fill="#222"/>
<path d="M315.0 62.5h4l-2 2.2z" fill="#fff" opacity=".55"/>
<rect x="349.2" y="59.8" width="4" height="0.9" fill="#222"/>
<path d="M349.2 61.5h4l-2 2.2z" fill="#222"/>
<path d="M350.2 62.5h4l-2 2.2z" fill="#fff" opacity=".55"/>
<rect x="434.3" y="59.8" width="4" height="0.9" fill="#222"/>
<path d="M434.3 61.5h4l-2 2.2z" fill="#222"/>
<path d="M435.3 62.5h4l-2 2.2z" fill="#fff" opacity=".55"/>
<rect x="4.4" y="466.6" width="1.2" height="1" fill="#555"/>
<rect x="4.4" y="468.8" width="1.2" height="1" fill="#555"/>
<rect x="4.4" y="471.0" width="1.2" height="1" fill="#555"/>
<rect x="4.4" y="473.2" width="1.2" height="1" fill="#555"/>
<rect x="49.9" y="466.6" width="1.2" height="1" fill="#555"/>
<rect x="49.9" y="468.8" width="1.2" height="1" fill="#555"/>
<rect x="49.9" y="471.0" width="1.2" height="1" fill="#555"/>
<rect x="49.9" y="473.2" width="1.2" height="1" fill="#555"/>
<rect x="203.4" y="466.6" width="1.2" height="1" fill="#555"/>
<rect x="203.4" y="468.8" width="1.2" height="1" fill="#555"/>
<rect x="203.4" y="471.0" width="1.2" height="1" fill="#555"/>
<rect x="203.4" y="473.2" width="1.2" height="1" fill="#555"/>
<path d="M12.0 468.5L14.2 466.8H21.0V471.6L18.8 473.3H12.0z" fill="#7f93b4" stroke="#2a4674" stroke-width="1"/>
<rect x="12.0" y="468.5" width="6.8" height="4.8" fill="#c7d3e6" stroke="#2a4674" stroke-width="0.9"/>
<path d="M27.7 469.2h3.6l-1.8 2z" fill="#777"/>
<rect x="38.0" y="471.4" width="4" height="0.9" fill="#222"/>
<path d="M38.0 473.1h4l-2 2.2z" fill="#222"/>
<path d="M39.0 474.1h4l-2 2.2z" fill="#fff" opacity=".55"/>
<rect x="55.5" y="466.9" width="11.5" height="6.6" fill="#fdfdfd" stroke="#4c678f" stroke-width="1.1"/>
<rect x="56.0" y="467.4" width="10.5" height="1.1" fill="#8fa4c4"/>
<path d="M57.5 469.9h7.5M61.2 470.8v2.4M59.6 471.9h3.2" fill="none" stroke="#e02020" stroke-width="1"/>
<rect x="72.5" y="466.9" width="12.0" height="6.6" fill="#fdfdfd" stroke="#4c678f" stroke-width="1.1"/>
<rect x="73.0" y="467.4" width="11.0" height="1.1" fill="#8fa4c4"/>
<path d="M75.9 472.8L78.5 469.5L81.1 472.8z" fill="none" stroke="#e02020" stroke-width="1"/>
<rect x="89.5" y="466.9" width="12.0" height="6.6" fill="#fdfdfd" stroke="#4c678f" stroke-width="1.1"/>
<rect x="90.0" y="467.4" width="11.0" height="1.1" fill="#8fa4c4"/>
<path d="M91.5 471.1h3.4M96.5 469.3v3.6M98.3 469.3v3.6" fill="none" stroke="#e02020" stroke-width="1"/>
<rect x="106.5" y="466.9" width="12.0" height="6.6" fill="#fdfdfd" stroke="#4c678f" stroke-width="1.1"/>
<rect x="107.0" y="467.4" width="11.0" height="1.1" fill="#8fa4c4"/>
<path d="M109.5 469.3v3.4M108.5 471.9l1 1l1-1M112.9 471.3a1.6 1.4 0 1 0 3.2 0a1.6 1.4 0 1 0-3.2 0" fill="none" stroke="#e02020" stroke-width="1"/>
<rect x="123.5" y="466.9" width="12.0" height="6.6" fill="#fdfdfd" stroke="#4c678f" stroke-width="1.1"/>
<rect x="124.0" y="467.4" width="11.0" height="1.1" fill="#8fa4c4"/>
<path d="M125.9 470.3h7.2v2.6h-7.2zM128.3 470.3v-1h2.4v1" fill="none" stroke="#e02020" stroke-width="1"/>
<rect x="140.5" y="466.9" width="12.0" height="6.6" fill="#fdfdfd" stroke="#4c678f" stroke-width="1.1"/>
<rect x="141.0" y="467.4" width="11.0" height="1.1" fill="#8fa4c4"/>
<path d="M144.9 469.3h3.2M144.9 472.9h3.2M145.8 469.3v3.6M147.2 469.3v3.6" fill="none" stroke="#e02020" stroke-width="1"/>
<rect x="157.5" y="466.9" width="12.0" height="6.6" fill="#fdfdfd" stroke="#4c678f" stroke-width="1.1"/>
<rect x="158.0" y="467.4" width="11.0" height="1.1" fill="#8fa4c4"/>
<path d="M159.7 469.5v3.2M161.1 469.5v3.2M162.5 470.8v2h1.6v-1.4M165.5 471.3h1.8M165.5 472.8h1.8" fill="none" stroke="#e02020" stroke-width="1"/>
<rect x="174.5" y="466.9" width="12.0" height="6.6" fill="#fdfdfd" stroke="#4c678f" stroke-width="1.1"/>
<rect x="175.0" y="467.4" width="11.0" height="1.1" fill="#8fa4c4"/>
<path d="M176.5 472.5q2.4 0.4 3.6-1.6t4-1.2M181.1 472.5h3" fill="none" stroke="#e02020" stroke-width="1"/>
<rect x="191.6" y="471.4" width="4" height="0.9" fill="#222"/>
<path d="M191.6 473.1h4l-2 2.2z" fill="#222"/>
<path d="M192.6 474.1h4l-2 2.2z" fill="#fff" opacity=".55"/>
<ellipse cx="212.4" cy="472.4" rx="3.6" ry="1.2" fill="none" stroke="#e02020" stroke-width="0.9"/>
<path d="M215.2 471.1L220.0 467.3" stroke="#2a4a88" stroke-width="2.6" stroke-linecap="round"/>
<path d="M216.0 470.1L219.6 467.7" stroke="#e6eefa" stroke-width="0.9"/>
<rect x="226.0" y="470.8" width="5" height="2.8" fill="none" stroke="#e02020" stroke-width="0.9"/>
<path d="M232.2 471.1L236.9 467.3" stroke="#2a4a88" stroke-width="2.6" stroke-linecap="round"/>
<path d="M232.9 470.1L236.5 467.7" stroke="#e6eefa" stroke-width="0.9"/>
<ellipse cx="246.1" cy="472.2" rx="2.4" ry="1.5" fill="none" stroke="#e02020" stroke-width="0.9"/>
<path d="M249.3 471.1L253.8 467.3" stroke="#2a4a88" stroke-width="2.6" stroke-linecap="round"/>
<path d="M250.1 470.1L253.4 467.7" stroke="#e6eefa" stroke-width="0.9"/>
<path d="M261.0 469.6l2.5 1.2" stroke="#e02020" stroke-width="1.6"/>
<path d="M267.0 466.7h3M267.0 473.4h3M268.5 466.7V473.4" stroke="#2a4674" stroke-width="1.1"/>
<rect x="281.0" y="467.2" width="7.5" height="3.7" fill="#d9e1ee" stroke="#2a4674" stroke-width="1"/>
<rect x="282.5" y="468.3" width="4.5" height="1.3" fill="#e02020"/>
<path d="M287.9 471.1L292.5 473.4" stroke="#2a4674" stroke-width="1.3"/>
<rect x="275.5" y="466.5" width="1.1" height="7.1" fill="#f1f1e6"/>
<rect x="274.9" y="466.5" width="0.6" height="7.1" fill="#a2a2a2"/>
<rect x="298.5" y="471.4" width="4" height="0.9" fill="#222"/>
<path d="M298.5 473.1h4l-2 2.2z" fill="#222"/>
<path d="M299.5 474.1h4l-2 2.2z" fill="#fff" opacity=".55"/>
<rect x="4.2" y="68.3" width="1.2" height="1.1" fill="#4c4c4c"/><rect x="4.8" y="69.0" width="1" height="0.8" fill="#f0f0f0" opacity=".7"/>
<rect x="7.3" y="68.3" width="1.2" height="1.1" fill="#4c4c4c"/><rect x="7.9" y="69.0" width="1" height="0.8" fill="#f0f0f0" opacity=".7"/>
<rect x="10.4" y="68.3" width="1.2" height="1.1" fill="#4c4c4c"/><rect x="11.0" y="69.0" width="1" height="0.8" fill="#f0f0f0" opacity=".7"/>
<rect x="13.5" y="68.3" width="1.2" height="1.1" fill="#4c4c4c"/><rect x="14.1" y="69.0" width="1" height="0.8" fill="#f0f0f0" opacity=".7"/>
<rect x="24.4" y="68.3" width="1.2" height="1.1" fill="#4c4c4c"/><rect x="25.0" y="69.0" width="1" height="0.8" fill="#f0f0f0" opacity=".7"/>
<rect x="27.5" y="68.3" width="1.2" height="1.1" fill="#4c4c4c"/><rect x="28.1" y="69.0" width="1" height="0.8" fill="#f0f0f0" opacity=".7"/>
<rect x="30.6" y="68.3" width="1.2" height="1.1" fill="#4c4c4c"/><rect x="31.2" y="69.0" width="1" height="0.8" fill="#f0f0f0" opacity=".7"/>
<rect x="33.7" y="68.3" width="1.2" height="1.1" fill="#4c4c4c"/><rect x="34.3" y="69.0" width="1" height="0.8" fill="#f0f0f0" opacity=".7"/>
<rect x="24.4" y="270.9" width="1.2" height="1.1" fill="#4c4c4c"/><rect x="25.0" y="271.6" width="1" height="0.8" fill="#f0f0f0" opacity=".7"/>
<rect x="27.5" y="270.9" width="1.2" height="1.1" fill="#4c4c4c"/><rect x="28.1" y="271.6" width="1" height="0.8" fill="#f0f0f0" opacity=".7"/>
<rect x="30.6" y="270.9" width="1.2" height="1.1" fill="#4c4c4c"/><rect x="31.2" y="271.6" width="1" height="0.8" fill="#f0f0f0" opacity=".7"/>
<rect x="33.7" y="270.9" width="1.2" height="1.1" fill="#4c4c4c"/><rect x="34.3" y="271.6" width="1" height="0.8" fill="#f0f0f0" opacity=".7"/>
<rect x="12.8" y="104.3" width="0.9" height="3" fill="#222"/>
<path d="M14.4 104.2v3.2l2.4-1.6z" fill="#222"/>
<rect x="32.8" y="263.5" width="0.9" height="3" fill="#222"/>
<path d="M34.4 263.4v3.2l2.4-1.6z" fill="#222"/>
<rect x="32.8" y="339.7" width="0.9" height="3" fill="#222"/>
<path d="M34.4 339.6v3.2l2.4-1.6z" fill="#222"/>
<rect x="959.2" y="68.2" width="1.2" height="1.1" fill="#4c4c4c"/><rect x="959.8" y="68.9" width="1" height="0.8" fill="#f0f0f0" opacity=".7"/>
<rect x="961.6" y="68.2" width="1.2" height="1.1" fill="#4c4c4c"/><rect x="962.2" y="68.9" width="1" height="0.8" fill="#f0f0f0" opacity=".7"/>
<rect x="964.0" y="68.2" width="1.2" height="1.1" fill="#4c4c4c"/><rect x="964.6" y="68.9" width="1" height="0.8" fill="#f0f0f0" opacity=".7"/>
<rect x="966.4" y="68.2" width="1.2" height="1.1" fill="#4c4c4c"/><rect x="967.0" y="68.9" width="1" height="0.8" fill="#f0f0f0" opacity=".7"/>
<rect x="968.8" y="68.2" width="1.2" height="1.1" fill="#4c4c4c"/><rect x="969.4" y="68.9" width="1" height="0.8" fill="#f0f0f0" opacity=".7"/>
<rect x="971.2" y="68.2" width="1.2" height="1.1" fill="#4c4c4c"/><rect x="971.8" y="68.9" width="1" height="0.8" fill="#f0f0f0" opacity=".7"/>
<rect x="973.6" y="68.2" width="1.2" height="1.1" fill="#4c4c4c"/><rect x="974.2" y="68.9" width="1" height="0.8" fill="#f0f0f0" opacity=".7"/>
<rect x="976.0" y="68.2" width="1.2" height="1.1" fill="#4c4c4c"/><rect x="976.6" y="68.9" width="1" height="0.8" fill="#f0f0f0" opacity=".7"/>
<rect x="978.4" y="68.2" width="1.2" height="1.1" fill="#4c4c4c"/><rect x="979.0" y="68.9" width="1" height="0.8" fill="#f0f0f0" opacity=".7"/>
<rect x="959.2" y="260.3" width="1.2" height="1.1" fill="#4c4c4c"/><rect x="959.8" y="261.0" width="1" height="0.8" fill="#f0f0f0" opacity=".7"/>
<rect x="961.6" y="260.3" width="1.2" height="1.1" fill="#4c4c4c"/><rect x="962.2" y="261.0" width="1" height="0.8" fill="#f0f0f0" opacity=".7"/>
<rect x="964.0" y="260.3" width="1.2" height="1.1" fill="#4c4c4c"/><rect x="964.6" y="261.0" width="1" height="0.8" fill="#f0f0f0" opacity=".7"/>
<rect x="966.4" y="260.3" width="1.2" height="1.1" fill="#4c4c4c"/><rect x="967.0" y="261.0" width="1" height="0.8" fill="#f0f0f0" opacity=".7"/>
<rect x="968.8" y="260.3" width="1.2" height="1.1" fill="#4c4c4c"/><rect x="969.4" y="261.0" width="1" height="0.8" fill="#f0f0f0" opacity=".7"/>
<rect x="971.2" y="260.3" width="1.2" height="1.1" fill="#4c4c4c"/><rect x="971.8" y="261.0" width="1" height="0.8" fill="#f0f0f0" opacity=".7"/>
<rect x="973.6" y="260.3" width="1.2" height="1.1" fill="#4c4c4c"/><rect x="974.2" y="261.0" width="1" height="0.8" fill="#f0f0f0" opacity=".7"/>
<rect x="976.0" y="260.3" width="1.2" height="1.1" fill="#4c4c4c"/><rect x="976.6" y="261.0" width="1" height="0.8" fill="#f0f0f0" opacity=".7"/>
<rect x="978.4" y="260.3" width="1.2" height="1.1" fill="#4c4c4c"/><rect x="979.0" y="261.0" width="1" height="0.8" fill="#f0f0f0" opacity=".7"/>
<rect x="959.2" y="336.3" width="1.2" height="1.1" fill="#4c4c4c"/><rect x="959.8" y="337.0" width="1" height="0.8" fill="#f0f0f0" opacity=".7"/>
<rect x="961.6" y="336.3" width="1.2" height="1.1" fill="#4c4c4c"/><rect x="962.2" y="337.0" width="1" height="0.8" fill="#f0f0f0" opacity=".7"/>
<rect x="964.0" y="336.3" width="1.2" height="1.1" fill="#4c4c4c"/><rect x="964.6" y="337.0" width="1" height="0.8" fill="#f0f0f0" opacity=".7"/>
<rect x="966.4" y="336.3" width="1.2" height="1.1" fill="#4c4c4c"/><rect x="967.0" y="337.0" width="1" height="0.8" fill="#f0f0f0" opacity=".7"/>
<rect x="968.8" y="336.3" width="1.2" height="1.1" fill="#4c4c4c"/><rect x="969.4" y="337.0" width="1" height="0.8" fill="#f0f0f0" opacity=".7"/>
<rect x="971.2" y="336.3" width="1.2" height="1.1" fill="#4c4c4c"/><rect x="971.8" y="337.0" width="1" height="0.8" fill="#f0f0f0" opacity=".7"/>
<rect x="973.6" y="336.3" width="1.2" height="1.1" fill="#4c4c4c"/><rect x="974.2" y="337.0" width="1" height="0.8" fill="#f0f0f0" opacity=".7"/>
<rect x="976.0" y="336.3" width="1.2" height="1.1" fill="#4c4c4c"/><rect x="976.6" y="337.0" width="1" height="0.8" fill="#f0f0f0" opacity=".7"/>
<rect x="978.4" y="336.3" width="1.2" height="1.1" fill="#4c4c4c"/><rect x="979.0" y="337.0" width="1" height="0.8" fill="#f0f0f0" opacity=".7"/>
<rect x="979.8" y="253.0" width="0.9" height="3" fill="#222"/>
<path d="M981.4 252.9v3.2l2.4-1.6z" fill="#222"/>
<rect x="979.8" y="328.5" width="0.9" height="3" fill="#222"/>
<path d="M981.4 328.4v3.2l2.4-1.6z" fill="#222"/>
<rect x="979.8" y="351.5" width="0.9" height="3" fill="#222"/>
<path d="M981.4 351.4v3.2l2.4-1.6z" fill="#222"/>
<path d="M6.1 75.7h7.0M9.6 72.2v7.0M7.2 73.2l4.9 4.9M12.0 73.2l-4.9 4.9" stroke="#e03030" stroke-width="0.9" fill="none"/>
<path d="M6.2 87.2a3.8 2.9 0 0 1 6.6-2.3M13.8 85.6a3.8 2.9 0 0 1-6.6 2.3" fill="none" stroke="#2a9a2a" stroke-width="1.8"/>
<path d="M13.8 82.8v2.8h-3zM6.2 90v-2.8h3z" fill="#2a9a2a"/>
<path d="M7.4 96.5v-1.4a2.6 2.2 0 0 1 5.2 0v1.4" fill="none" stroke="#3b4f6e" stroke-width="1"/><rect x="5.6" y="96.3" width="8.8" height="4.4" rx="0.8" fill="#f2f5fa" stroke="#3b4f6e" stroke-width="1"/>
<rect x="25.3" y="72.6" width="9" height="6.8" rx="1.4" fill="#e8edf6" stroke="#2a4674" stroke-width="1.1"/><path d="M27.8 72.6v6.8M31.8 72.6v6.8" stroke="#2a4674" stroke-width="0.8"/>
<path d="M24.8 86.1h10" stroke="#2a4674" stroke-width="1.3"/><path d="M25.400000000000002 84.6v3M34.199999999999996 84.6v3" stroke="#2a4674" stroke-width="1"/>
<circle cx="29.8" cy="89.39999999999999" r="2.6" fill="#e02020"/><rect x="28.8" y="88.39999999999999" width="2" height="2" fill="#fff"/>
<rect x="27.8" y="97.4" width="7" height="6" rx="1.2" fill="#e8edf6" stroke="#2a4674" stroke-width="1"/>
<path d="M25.2 100.4h5.2M27.8 97.8v5.2M26.0 98.6l3.6 3.6M29.6 98.6l-3.6 3.6" stroke="#e02020" stroke-width="0.9" fill="none"/>
<path d="M24.8 108.60000000000001h10M24.8 113.8h10" stroke="#2a4674" stroke-width="1"/><path d="M25.8 109.2l8 4M33.8 109.2l-8 4" stroke="#556" stroke-width="0.8"/><path d="M27.8 111.2h4" stroke="#e02020" stroke-width="1.2"/>
<ellipse cx="29.8" cy="124.6" rx="5" ry="3.3" fill="#dfe6f2" stroke="#24426e" stroke-width="1.3"/><ellipse cx="29.8" cy="124.6" rx="1.8" ry="2" fill="#24426e"/>
<path d="M25.3 133.4v5.5h9v-5.5" fill="#f2f5fa" stroke="#2a4674" stroke-width="1.1"/>
<path d="M27.8 133.0h4.0M29.8 131.0v4.0M28.4 131.6l2.8 2.8M31.2 131.6l-2.8 2.8" stroke="#e02020" stroke-width="0.9" fill="none"/>
<path d="M25.8 145.4h8" stroke="#555" stroke-width="0.8"/><path d="M26.8 148.2h2.5M30.3 148.2h3" stroke="#e02020" stroke-width="1.4"/><path d="M29.8 143.8v3" stroke="#e02020" stroke-width="0.9"/>
<path d="M25.3 155h9" stroke="#e02020" stroke-width="1.1"/><circle cx="25.8" cy="155" r="1" fill="#e02020"/><circle cx="33.8" cy="155" r="1" fill="#e02020"/><rect x="25.8" y="157.2" width="8" height="2.4" rx="1" fill="#dfe6f2" stroke="#2a4674" stroke-width="0.8"/>
<rect x="24.400000000000002" y="164.7" width="10.8" height="6.6" fill="#e42828" stroke="#c01818" stroke-width="0.6"/>
<path d="M26.8 166.4h6M27.2 169.4h2M30.6 169.4h2" stroke="#fff" stroke-width="1.1"/>
<rect x="24.400000000000002" y="175.5" width="10.8" height="6.6" fill="#e42828" stroke="#c01818" stroke-width="0.6"/>
<path d="M26.8 177.3l2 1.5l-2 1.5M32.8 177.3l-2 1.5l2 1.5M28.8 178.8h2" stroke="#fff" stroke-width="1" fill="none"/>
<rect x="24.400000000000002" y="186.29999999999998" width="10.8" height="6.6" fill="#e42828" stroke="#c01818" stroke-width="0.6"/>
<rect x="26.8" y="187.4" width="6" height="4.4" fill="#fff"/><circle cx="29.8" cy="189.6" r="1" fill="#e02020"/>
<rect x="24.400000000000002" y="196.89999999999998" width="10.8" height="6.6" fill="#e42828" stroke="#c01818" stroke-width="0.6"/>
<rect x="27.400000000000002" y="198.2" width="4.8" height="4" fill="none" stroke="#fff" stroke-width="0.9"/><circle cx="29.8" cy="200.2" r="0.9" fill="#fff"/>
<path d="M24.400000000000002 208.6h10.8" stroke="#e02020" stroke-width="2.6"/><path d="M29.8 209.6v3.8" stroke="#e02020" stroke-width="3.4"/>
<path d="M32.8 217.6v2.4q0 3-7.6 3" fill="none" stroke="#e02020" stroke-width="2.8"/>
<rect x="26.0" y="228.0" width="7.6" height="7.2" fill="#fff" stroke="#e02020" stroke-width="1.2"/><rect x="27.8" y="228.6" width="4" height="2.2" fill="#e02020"/><rect x="27.6" y="232.2" width="4.4" height="2.4" fill="none" stroke="#e02020" stroke-width="0.8"/>
<path d="M25.8 247l4-2.8v1.7q4 0 4.6 3.4q-1.6-1.7-4.6-1.7v1.9z" fill="#8f8f8f" stroke="#7a7a7a" stroke-width="0.4"/>
<path d="M33.8 256.4l-4-2.8v1.7q-4 0-4.6 3.4q1.6-1.7 4.6-1.7v1.9z" fill="#8f8f8f" stroke="#7a7a7a" stroke-width="0.4"/>
<path d="M25.8 279.5h5" stroke="#456088" stroke-width="2.2"/><path d="M34.3 279.5l-4-2.6v5.2z" fill="#456088"/><path d="M25.8 277.7v3.6" stroke="#24426e" stroke-width="1"/>
<path d="M33.3 290.2h-5" stroke="#456088" stroke-width="2"/><path d="M25.8 290.2l4-2.4v4.8z" fill="#456088"/>
<path d="M26.3 300.6h5" stroke="#456088" stroke-width="2"/><path d="M33.8 300.6l-4-2.4v4.8z" fill="#456088"/>
<path d="M32.8 311.2h-4" stroke="#456088" stroke-width="2.2"/><path d="M25.3 311.2l4-2.6v5.2z" fill="#456088"/><path d="M33.8 309.4v3.6" stroke="#24426e" stroke-width="1"/>
<circle cx="26.8" cy="323" r="1.4" fill="none" stroke="#24426e" stroke-width="0.9"/><circle cx="29.8" cy="323" r="1.4" fill="none" stroke="#24426e" stroke-width="0.9"/><circle cx="32.8" cy="323" r="1.4" fill="none" stroke="#24426e" stroke-width="0.9"/><path d="M27.3 320h5" stroke="#e02020" stroke-width="1"/>
<rect x="26.0" y="330.3" width="3" height="5.4" rx="1.4" fill="#fff" stroke="#24426e" stroke-width="1"/><rect x="30.6" y="330.3" width="3" height="5.4" rx="1.4" fill="#fff" stroke="#24426e" stroke-width="1"/><path d="M28.2 329.09999999999997h3.2" stroke="#e02020" stroke-width="0.9"/>
<rect x="24.2" y="117.6" width="11.2" height="0.9" fill="#e8e8e8"/>
<rect x="24.2" y="141.0" width="11.2" height="0.9" fill="#e8e8e8"/>
<rect x="24.2" y="239.0" width="11.2" height="0.9" fill="#e8e8e8"/>
<rect x="957.4" y="81.3" width="16.0" height="10.200000000000003" rx="1" fill="#fdd766" stroke="#e9b936" stroke-width="0.8"/>
<rect x="973.4" y="81.3" width="11.5" height="10.200000000000003" rx="1" fill="#fdd766" stroke="#e9b936" stroke-width="0.8"/>
<rect x="961.8" y="127.4" width="17.600000000000023" height="10.599999999999994" rx="1" fill="#fdd766" stroke="#e9b936" stroke-width="0.8"/>
<rect x="961.8" y="184.8" width="17.600000000000023" height="10.599999999999994" rx="1" fill="#fdd766" stroke="#e9b936" stroke-width="0.8"/>
<rect x="961.8" y="208.2" width="17.600000000000023" height="10.600000000000023" rx="1" fill="#fdd766" stroke="#e9b936" stroke-width="0.8"/>
<path d="M959.7 77.9v-3h4.5v-2.5h6v4q0 2-2.5 2h-8z" fill="#f2f5fa" stroke="#24426e" stroke-width="1.1"/>
<path d="M960.2 83.6v6M970.2 83.6v6M962.7 83.6v6M967.7 83.6v6" stroke="#24426e" stroke-width="1.1"/><path d="M962.7 84.39999999999999l5 4.4v-4.4l-5 4.4z" fill="#f2f5fa" stroke="#24426e" stroke-width="0.8"/>
<path d="M960.2 93.8v6.8M970.2 93.8v6.8" stroke="#24426e" stroke-width="1"/><rect x="962.1" y="95.2" width="2.8" height="4" fill="none" stroke="#24426e" stroke-width="0.8"/><rect x="965.6" y="95.2" width="2.8" height="4" fill="none" stroke="#24426e" stroke-width="0.8"/>
<path d="M960.2 104.39999999999999L970.2 106.2V109.39999999999999L960.2 111.2z" fill="#f2f5fa" stroke="#24426e" stroke-width="1.1"/><path d="M962.2 104.8v6" stroke="#24426e" stroke-width="0.8"/>
<path d="M963.7 115.6h9v3.4q0 2.6-2 2.6h-5q-2 0-2-2.6z" fill="#f2f5fa" stroke="#24426e" stroke-width="1.1"/><path d="M966.1 119.0h4.2v2.6" stroke="#24426e" stroke-width="0.7" fill="none"/>
<path d="M965.6 134.6L970.6 130L975.6 134.6z" fill="#f2f5fa" stroke="#24426e" stroke-width="1"/><path d="M965.6 136H975.6" stroke="#8a6a3a" stroke-width="1" stroke-dasharray="1.4 0.8"/>
<rect x="961.2" y="140.2" width="8" height="6.8" fill="#5e7092" stroke="#24426e" stroke-width="0.8"/><path d="M961.2 140.2l8 6.8m0-6.8l-8 6.8" stroke="#dfe6f2" stroke-width="1.2"/>
<rect x="964.3000000000001" y="151.6" width="8" height="5.6" rx="1" fill="#f2f5fa" stroke="#24426e" stroke-width="1.1"/><path d="M966.3000000000001 151.6v5.6" stroke="#24426e" stroke-width="0.8"/>
<path d="M967.1 167.4l3.4-4.6l3.4 4.6z" fill="none" stroke="#555" stroke-width="0.9"/><path d="M974.5 161.4l2.8 2.8m0-2.8l-2.8 2.8" stroke="#555" stroke-width="0.8"/>
<ellipse cx="970.6" cy="180.2" rx="5.4" ry="1.7" fill="#eef2f8" stroke="#3b4f6e" stroke-width="0.9"/><path d="M970.6 175.6v4M968.2 177.79999999999998h4.8" stroke="#3b4f6e" stroke-width="0.9"/>
<path d="M965.6 193.2v-2.6q2.6-2 5 0t5 0v2.6z" fill="#fff" stroke="#3b4f6e" stroke-width="0.9"/><path d="M968.1 188l5.4-1.2" stroke="#d08020" stroke-width="1.2"/>
<ellipse cx="970.6" cy="203.2" rx="5.4" ry="1.6" fill="#eef2f8" stroke="#24426e" stroke-width="0.9"/><path d="M967.7 202.2v-3.4h5.8v3.4M970.6 198.79999999999998v3.4" fill="none" stroke="#24426e" stroke-width="1"/>
<path d="M967.1 216.6l7-6M968.5 212.0l3.6 3" stroke="#e02020" stroke-width="1.5"/><path d="M967.1 211.2l2 1.4" stroke="#e02020" stroke-width="1"/>
<path d="M967.1 221.4h9M970.1 221.4v3" stroke="#445" stroke-width="0.9"/><circle cx="970.7" cy="225.8" r="1.8" fill="#e02020"/><path d="M968.1 223.0v4.8" stroke="#24426e" stroke-width="1.1"/>
<circle cx="967.3000000000001" cy="236.39999999999998" r="1.5" fill="none" stroke="#24426e" stroke-width="0.9"/><circle cx="973.9" cy="236.39999999999998" r="1.5" fill="none" stroke="#24426e" stroke-width="0.9"/><path d="M968.5 233.79999999999998h4.2" stroke="#e02020" stroke-width="1.2"/><circle cx="968.5" cy="233.79999999999998" r="0.8" fill="#e02020"/><circle cx="972.7" cy="233.79999999999998" r="0.8" fill="#e02020"/>
<path d="M961.7 242.60000000000002h2.4q4.4 0 4.4 3.2t-4.4 3.2h-2.4z" fill="#f2f5fa" stroke="#24426e" stroke-width="1.1"/><path d="M963.7 242.8v6" stroke="#24426e" stroke-width="0.7"/>
<ellipse cx="971.2" cy="269.8" rx="3" ry="2.2" fill="#c7d3e6" stroke="#24426e" stroke-width="0.9"/><path d="M967.2 267.6q3.4-3.6 7.4-0.8" stroke="#e02020" stroke-width="1" fill="none"/><path d="M966.0 267l1.6 2.2l1-2.4z" fill="#e02020"/><path d="M975.4 265.6l-0.2 2.6l-2.2-1.2z" fill="#e02020"/>
<ellipse cx="968.4" cy="281" rx="2.2" ry="1.8" fill="#c7d3e6" stroke="#24426e" stroke-width="0.9"/><ellipse cx="973.0" cy="281" rx="2.2" ry="1.8" fill="#c7d3e6" stroke="#24426e" stroke-width="0.9"/><path d="M971.6 278.4q2-2 3.6 0.6" stroke="#e02020" stroke-width="1.1" fill="none"/><path d="M976.0 278l-0.6 2.4l-1.8-1.6z" fill="#e02020"/>
<ellipse cx="967.6" cy="290.4" rx="2" ry="1.8" fill="#c7d3e6" stroke="#24426e" stroke-width="0.9"/><ellipse cx="973.8000000000001" cy="290.4" rx="2" ry="1.8" fill="#c7d3e6" stroke="#24426e" stroke-width="0.9"/><path d="M969.6 290.4h2.4" stroke="#e02020" stroke-width="1.3"/>
<path d="M966.1 299.4h10M970.0 297.79999999999995v3.2" stroke="#333" stroke-width="0.8"/><path d="M966.5 303.2h3.4M971.6 303.2h3.6" stroke="#e02020" stroke-width="1.5"/><path d="M969.0 302.0v2.6" stroke="#333" stroke-width="0.7"/>
<rect x="969.0" y="308.20000000000005" width="3.6" height="3" fill="#c7d3e6" stroke="#24426e" stroke-width="0.8"/><rect x="969.0" y="312.0" width="3.6" height="3" fill="#c7d3e6" stroke="#24426e" stroke-width="0.8"/><path d="M968.2 309.0q-3 2.6 0 5.4M973.4 314.40000000000003q3-2.6 0-5.4" stroke="#e02020" stroke-width="1.2" fill="none"/>
<rect x="966.0" y="318.4" width="4" height="3" fill="#c7d3e6" stroke="#24426e" stroke-width="0.8"/><rect x="970.2" y="321.4" width="5.6" height="4.2" fill="#f6e0e0" stroke="#e02020" stroke-width="1"/><path d="M967.2 322.4v2.4h2" stroke="#e02020" stroke-width="0.9" fill="none"/>
<path d="M967.0 347L974.2 343" stroke="#2e62b8" stroke-width="4.2" stroke-linecap="round"/><path d="M967.2 346L973.6 342.4" stroke="#8ab4ee" stroke-width="1.1" stroke-linecap="round"/><path d="M969.2 343.8l1.6 2.8M971.4 342.6l1.6 2.8" stroke="#1c3f80" stroke-width="0.6"/>
<path d="M977.2 74.6h3.6l-1.8 2z" fill="#666"/>
<path d="M977.2 96.4h3.6l-1.8 2z" fill="#666"/>
<path d="M977.2 107.0h3.6l-1.8 2z" fill="#666"/>
<path d="M977.2 142.8h3.6l-1.8 2z" fill="#666"/>
<path d="M977.2 245.0h3.6l-1.8 2z" fill="#666"/>
<path d="M977.2 85.6h3.6l-1.8 2z" fill="#333"/>
<rect x="961.0" y="125.0" width="22.0" height="0.9" fill="#e8e8e8"/>
<rect x="961.0" y="172.0" width="22.0" height="0.9" fill="#e8e8e8"/>
<rect x="961.0" y="205.9" width="22.0" height="0.9" fill="#e8e8e8"/>
</g>
<g id="misc">
<defs><linearGradient id="ai" x1="0" y1="0" x2="0" y2="1"><stop offset="0" stop-color="#b4cdea"/><stop offset="1" stop-color="#7f9cc4"/></linearGradient></defs>
<rect x="2" y="2.3" width="14.4" height="9" rx="1.8" fill="#4a74b4" stroke="#5a86c6" stroke-width="0.6"/>
<rect x="6.2" y="2.8" width="10" height="3.8" rx="1" fill="url(#ai)"/>
<rect x="3" y="6.6" width="12.6" height="1.3" fill="#8e96a2"/>
<rect x="2.8" y="8" width="13" height="2.7" rx="0.8" fill="#2a5cae"/>
<rect x="3.4" y="2.8" width="2.6" height="4.6" fill="#23a437"/><rect x="4.4" y="3" width="0.7" height="4" fill="#7ee08c"/>
<rect x="12.8" y="7.4" width="1.6" height="2.6" fill="#e8ead8"/><rect x="14.6" y="7.4" width="1.4" height="2.6" fill="#1a2a6a"/>
<rect x="894" y="7.4" width="11" height="1.3" fill="#1c2c44"/>
<path d="M921 4.4h9.6v4.8h-9.6zM922.6 4.2l1.6-2h8.4v4.6l-1.8 2" fill="none" stroke="#1c2c44" stroke-width="1.2"/>
<path d="M957 3l8 5m0-5l-8 5" stroke="#fff" stroke-width="1.5" fill="none"/>
<rect x="5.2" y="16.8" width="1.2" height="1.1" fill="#ddd"/>
<rect x="5.2" y="19.0" width="1.2" height="1.1" fill="#ddd"/>
<rect x="5.2" y="21.2" width="1.2" height="1.1" fill="#ddd"/>
<rect x="5.2" y="23.4" width="1.2" height="1.1" fill="#ddd"/>
<path d="M918 22.8q14-6.2 44-5.6" fill="none" stroke="#a4a4a4" stroke-width="0.7"/><circle cx="983.6" cy="19.6" r="0.6" fill="#c8c8c8"/>
<rect x="82" y="441.6" width="16" height="8.6" fill="#cdcdcd"/>
<path d="M76.8 443.1l-4.4 2.4l4.4 2.4" fill="none" stroke="#222" stroke-width="1.3"/>
<path d="M926.8 443.1l4.4 2.4l-4.4 2.4" fill="none" stroke="#222" stroke-width="1.3"/>
<rect x="62.6" y="440.4" width="4" height="9.6" fill="#fff"/><rect x="66" y="440.6" width="1" height="9.6" fill="#333"/>
<rect x="938.4" y="80" width="14.5" height="9.6" fill="#cdcdcd"/>
<path d="M942 76.8l3.5-2.8l3.5 2.8" fill="none" stroke="#222" stroke-width="1.25"/>
<path d="M942.3 433.2l3.5 2.8l3.5-2.8" fill="none" stroke="#222" stroke-width="1.25"/>
<rect x="938" y="65" width="14.4" height="3.6" fill="#fff"/><rect x="938" y="68.4" width="14.6" height="0.9" fill="#333"/><rect x="952.2" y="65" width="0.9" height="4" fill="#333"/>
<rect x="949.4" y="448.5" width="1.2" height="1" fill="#bbb"/>
<rect x="949.4" y="446.5" width="1.2" height="1" fill="#bbb"/>
<rect x="949.4" y="444.5" width="1.2" height="1" fill="#bbb"/>
<rect x="947.4" y="448.5" width="1.2" height="1" fill="#bbb"/>
<rect x="947.4" y="446.5" width="1.2" height="1" fill="#bbb"/>
<rect x="945.4" y="448.5" width="1.2" height="1" fill="#bbb"/>
<rect x="943.4" y="448.5" width="1.2" height="1" fill="#bbb"/>
<rect x="858.2" y="453.6" width="0.8" height="9" fill="#1a1a1a"/><rect x="859" y="453.6" width="0.6" height="9" fill="#555"/>
<rect x="120" y="476.2" width="45" height="2" fill="#f2d678"/><rect x="227.5" y="476.2" width="52.5" height="2" fill="#76aaea"/><rect x="282.5" y="476.2" width="51" height="2" fill="#c5dcf6"/><rect x="67" y="476.2" width="47" height="2" fill="#5b98e6"/>
<rect x="114" y="476.2" width="1.6" height="2" fill="#cfe0f6"/>
<rect x="172" y="476.2" width="1.6" height="2" fill="#cfe0f6"/>
<rect x="177" y="476.2" width="1.6" height="2" fill="#cfe0f6"/>
<rect x="345" y="476.2" width="1.6" height="2" fill="#cfe0f6"/>
<rect x="402" y="476.2" width="1.6" height="2" fill="#cfe0f6"/>
</g>
<g id="labels">
<text x="217.6" y="10.6" font-size="9.8" fill="#16202e" font-weight="normal" textLength="550.1" lengthAdjust="spacingAndGlyphs" >CAESAR II - [C:\USERS\PRAKASH\DESKTOP\CAESER MODEL\SYSTEM - 01_COMBINED]</text>
<text x="13.2" y="23.6" font-size="7.2" fill="#f0f0f0" font-weight="normal" textLength="14.0" lengthAdjust="spacingAndGlyphs" >File</text>
<text x="39.0" y="23.6" font-size="7.2" fill="#f0f0f0" font-weight="normal" textLength="15.8" lengthAdjust="spacingAndGlyphs" >Edit</text>
<text x="66.9" y="23.6" font-size="7.2" fill="#f0f0f0" font-weight="normal" textLength="29.4" lengthAdjust="spacingAndGlyphs" >Model</text>
<text x="106.5" y="23.6" font-size="7.2" fill="#f0f0f0" font-weight="normal" textLength="54.8" lengthAdjust="spacingAndGlyphs" >Environment</text>
<text x="172.9" y="23.6" font-size="7.2" fill="#f0f0f0" font-weight="normal" textLength="35.0" lengthAdjust="spacingAndGlyphs" >Options</text>
<text x="218.6" y="23.6" font-size="7.2" fill="#f0f0f0" font-weight="normal" textLength="20.8" lengthAdjust="spacingAndGlyphs" >View</text>
<text x="250.5" y="23.6" font-size="7.2" fill="#f0f0f0" font-weight="normal" textLength="24.3" lengthAdjust="spacingAndGlyphs" >Tools</text>
<text x="286.0" y="23.6" font-size="7.2" fill="#f0f0f0" font-weight="normal" textLength="20.3" lengthAdjust="spacingAndGlyphs" >Help</text>
<text x="43.0" y="461.0" font-size="7.5" fill="#e2ddcf" font-weight="normal" textLength="30.9" lengthAdjust="spacingAndGlyphs" >Ready</text>
<text x="863.7" y="461.0" font-size="7.5" fill="#6c6c6c" font-weight="normal" textLength="19.9" lengthAdjust="spacingAndGlyphs" >CAP</text>
<text x="892.6" y="461.0" font-size="7.5" fill="#ececec" font-weight="normal" textLength="25.4" lengthAdjust="spacingAndGlyphs" stroke="#ececec" stroke-width="0.3">NUM</text>
<text x="926.2" y="461.0" font-size="7.5" fill="#6c6c6c" font-weight="normal" textLength="24.8" lengthAdjust="spacingAndGlyphs" >SCRL</text>
<text x="929.2" y="24.3" font-size="7.1" fill="#d2d2d2" font-weight="normal" textLength="52.8" lengthAdjust="spacingAndGlyphs" style="font-family:'Liberation Serif',serif">INTERGRAPH</text>
<text transform="translate(46.2,71.3) rotate(90)" font-size="10.8" fill="#18223c" stroke="#18223c" stroke-width="0.2" textLength="63.2" lengthAdjust="spacingAndGlyphs">Classic Piping Input</text>
<text x="110.4" y="392.4" font-size="9.6" fill="#3bd83b" text-anchor="middle">Y</text>
<text x="86.7" y="418.5" font-size="9.6" fill="#d84848" text-anchor="middle">Z</text>
<text x="134.9" y="418.5" font-size="9.6" fill="#3a6ae8" text-anchor="middle">X</text>
</g>
</svg>
</body></html>
